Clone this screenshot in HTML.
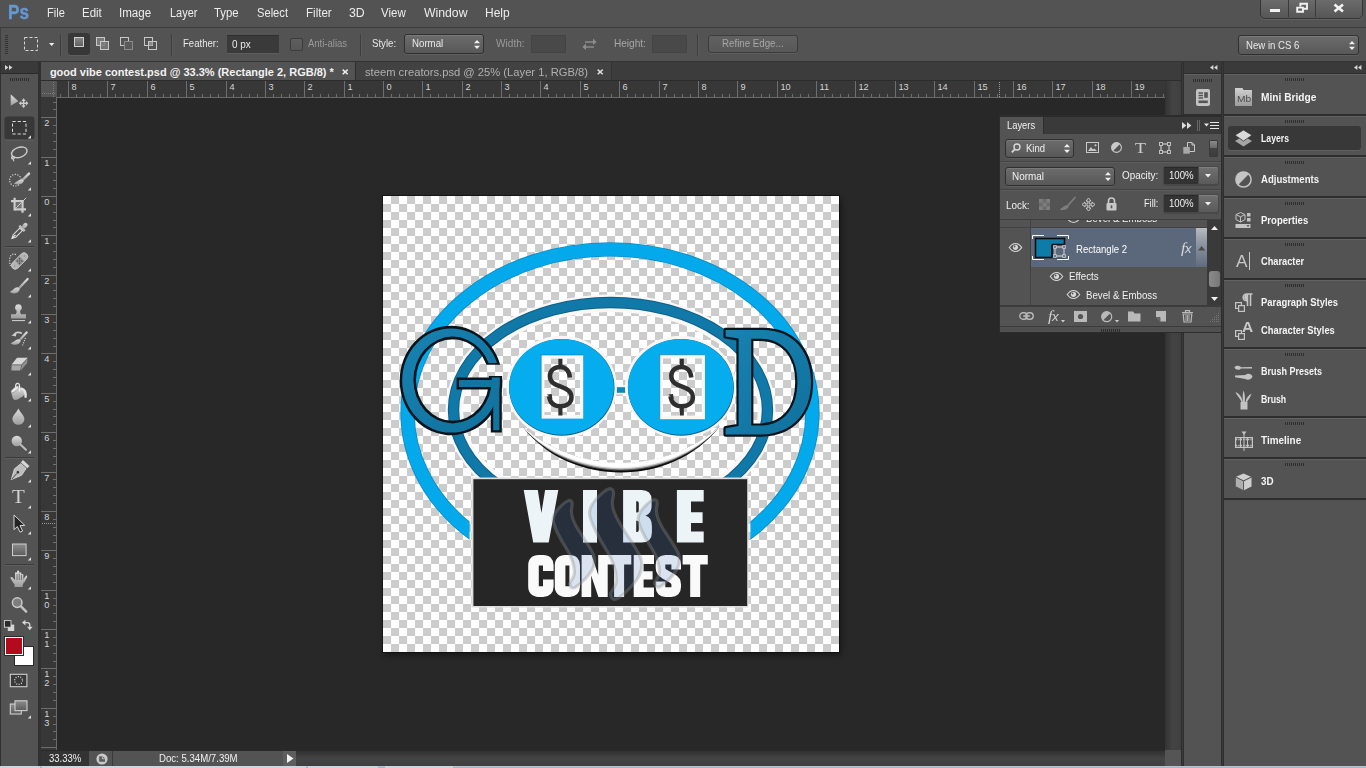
<!DOCTYPE html>
<html><head><meta charset="utf-8"><title>Photoshop</title><style>
html,body{margin:0;padding:0;}
body{width:1366px;height:768px;overflow:hidden;position:relative;background:#535353;font-family:"Liberation Sans",sans-serif;}
div,svg,span.t{position:absolute;}
span.t{white-space:pre;line-height:16px;transform-origin:0 50%;}
svg{overflow:visible}
</style></head><body>
<div style="left:0px;top:0px;width:1366px;height:27px;background:#535353"></div>
<div style="left:0px;top:27px;width:1366px;height:1px;background:#3b3b3b"></div>
<div style="left:0px;top:28px;width:1366px;height:33px;background:#535353"></div>
<div style="left:0px;top:28px;width:1px;height:33px;background:#3f3f3f"></div>
<div style="left:0px;top:61px;width:1366px;height:1px;background:#333"></div>
<div style="left:0px;top:62px;width:41px;height:706px;background:#303030"></div>
<div style="left:1px;top:62px;width:37px;height:11px;background:#3a3a3a"></div>
<div style="left:1px;top:73px;width:37px;height:1px;background:#2b2b2b"></div>
<div style="left:1px;top:74px;width:37px;height:694px;background:#535353"></div>
<div style="left:41px;top:62px;width:1140px;height:19px;background:#3c3c3c"></div>
<div style="left:41px;top:62px;width:314px;height:19px;background:#535353"></div>
<div style="left:355px;top:62px;width:1px;height:19px;background:#2e2e2e"></div>
<div style="left:356px;top:62px;width:255px;height:19px;background:#424242"></div>
<div style="left:611px;top:62px;width:1px;height:19px;background:#333"></div>
<div style="left:41px;top:80px;width:1140px;height:1px;background:#2c2c2c"></div>
<div style="left:41px;top:81px;width:1124px;height:17px;background:#373737"></div>
<div style="left:41px;top:81px;width:16px;height:669px;background:#373737"></div>
<div style="left:41px;top:81px;width:16px;height:16px;background:#555"></div>
<div style="left:57px;top:98px;width:1108px;height:652px;background:#282828"></div>
<div style="left:57px;top:97px;width:1108px;height:1px;background:#6a6a6a"></div>
<div style="left:56px;top:97px;width:1px;height:653px;background:#6a6a6a"></div>
<div style="left:1165px;top:81px;width:16px;height:669px;background:linear-gradient(90deg,#333 0%,#444 50%,#3f3f3f 100%)"></div>
<div style="left:296px;top:750px;width:869px;height:16px;background:linear-gradient(180deg,#2e2e2e 0%,#444 55%,#3f3f3f 100%)"></div>
<div style="left:1165px;top:750px;width:16px;height:16px;background:#555"></div>
<div style="left:41px;top:750px;width:1124px;height:1px;background:#2a2a2a"></div>
<div style="left:1181px;top:62px;width:3px;height:706px;background:#2e2e2e"></div>
<div style="left:1182px;top:62px;width:1px;height:706px;background:#3a3a3a"></div>
<div style="left:1184px;top:62px;width:37px;height:11px;background:#3a3a3a"></div>
<div style="left:1184px;top:73px;width:37px;height:1px;background:#2b2b2b"></div>
<div style="left:1184px;top:74px;width:37px;height:694px;background:#535353"></div>
<div style="left:1221px;top:62px;width:3px;height:706px;background:#2e2e2e"></div>
<div style="left:1222px;top:62px;width:1px;height:706px;background:#3a3a3a"></div>
<div style="left:1224px;top:62px;width:142px;height:11px;background:#3a3a3a"></div>
<div style="left:1224px;top:73px;width:142px;height:1px;background:#2b2b2b"></div>
<div style="left:1224px;top:74px;width:142px;height:694px;background:#535353"></div>
<svg style="left:0;top:0" width="1366" height="768"><rect x="60" y="94" width="1" height="3" fill="#6e6e6e"/><rect x="68" y="81" width="1" height="16" fill="#6e6e6e"/><rect x="76" y="94" width="1" height="3" fill="#6e6e6e"/><rect x="84" y="94" width="1" height="3" fill="#6e6e6e"/><rect x="92" y="94" width="1" height="3" fill="#6e6e6e"/><rect x="100" y="94" width="1" height="3" fill="#6e6e6e"/><rect x="107" y="81" width="1" height="16" fill="#6e6e6e"/><rect x="115" y="94" width="1" height="3" fill="#6e6e6e"/><rect x="123" y="94" width="1" height="3" fill="#6e6e6e"/><rect x="131" y="94" width="1" height="3" fill="#6e6e6e"/><rect x="139" y="94" width="1" height="3" fill="#6e6e6e"/><rect x="147" y="81" width="1" height="16" fill="#6e6e6e"/><rect x="155" y="94" width="1" height="3" fill="#6e6e6e"/><rect x="163" y="94" width="1" height="3" fill="#6e6e6e"/><rect x="170" y="94" width="1" height="3" fill="#6e6e6e"/><rect x="178" y="94" width="1" height="3" fill="#6e6e6e"/><rect x="186" y="81" width="1" height="16" fill="#6e6e6e"/><rect x="194" y="94" width="1" height="3" fill="#6e6e6e"/><rect x="202" y="94" width="1" height="3" fill="#6e6e6e"/><rect x="210" y="94" width="1" height="3" fill="#6e6e6e"/><rect x="218" y="94" width="1" height="3" fill="#6e6e6e"/><rect x="226" y="81" width="1" height="16" fill="#6e6e6e"/><rect x="233" y="94" width="1" height="3" fill="#6e6e6e"/><rect x="241" y="94" width="1" height="3" fill="#6e6e6e"/><rect x="249" y="94" width="1" height="3" fill="#6e6e6e"/><rect x="257" y="94" width="1" height="3" fill="#6e6e6e"/><rect x="265" y="81" width="1" height="16" fill="#6e6e6e"/><rect x="273" y="94" width="1" height="3" fill="#6e6e6e"/><rect x="281" y="94" width="1" height="3" fill="#6e6e6e"/><rect x="289" y="94" width="1" height="3" fill="#6e6e6e"/><rect x="296" y="94" width="1" height="3" fill="#6e6e6e"/><rect x="304" y="81" width="1" height="16" fill="#6e6e6e"/><rect x="312" y="94" width="1" height="3" fill="#6e6e6e"/><rect x="320" y="94" width="1" height="3" fill="#6e6e6e"/><rect x="328" y="94" width="1" height="3" fill="#6e6e6e"/><rect x="336" y="94" width="1" height="3" fill="#6e6e6e"/><rect x="344" y="81" width="1" height="16" fill="#6e6e6e"/><rect x="352" y="94" width="1" height="3" fill="#6e6e6e"/><rect x="359" y="94" width="1" height="3" fill="#6e6e6e"/><rect x="367" y="94" width="1" height="3" fill="#6e6e6e"/><rect x="375" y="94" width="1" height="3" fill="#6e6e6e"/><rect x="383" y="81" width="1" height="16" fill="#6e6e6e"/><rect x="391" y="94" width="1" height="3" fill="#6e6e6e"/><rect x="399" y="94" width="1" height="3" fill="#6e6e6e"/><rect x="407" y="94" width="1" height="3" fill="#6e6e6e"/><rect x="414" y="94" width="1" height="3" fill="#6e6e6e"/><rect x="422" y="81" width="1" height="16" fill="#6e6e6e"/><rect x="430" y="94" width="1" height="3" fill="#6e6e6e"/><rect x="438" y="94" width="1" height="3" fill="#6e6e6e"/><rect x="446" y="94" width="1" height="3" fill="#6e6e6e"/><rect x="454" y="94" width="1" height="3" fill="#6e6e6e"/><rect x="462" y="81" width="1" height="16" fill="#6e6e6e"/><rect x="470" y="94" width="1" height="3" fill="#6e6e6e"/><rect x="477" y="94" width="1" height="3" fill="#6e6e6e"/><rect x="485" y="94" width="1" height="3" fill="#6e6e6e"/><rect x="493" y="94" width="1" height="3" fill="#6e6e6e"/><rect x="501" y="81" width="1" height="16" fill="#6e6e6e"/><rect x="509" y="94" width="1" height="3" fill="#6e6e6e"/><rect x="517" y="94" width="1" height="3" fill="#6e6e6e"/><rect x="525" y="94" width="1" height="3" fill="#6e6e6e"/><rect x="533" y="94" width="1" height="3" fill="#6e6e6e"/><rect x="540" y="81" width="1" height="16" fill="#6e6e6e"/><rect x="548" y="94" width="1" height="3" fill="#6e6e6e"/><rect x="556" y="94" width="1" height="3" fill="#6e6e6e"/><rect x="564" y="94" width="1" height="3" fill="#6e6e6e"/><rect x="572" y="94" width="1" height="3" fill="#6e6e6e"/><rect x="580" y="81" width="1" height="16" fill="#6e6e6e"/><rect x="588" y="94" width="1" height="3" fill="#6e6e6e"/><rect x="596" y="94" width="1" height="3" fill="#6e6e6e"/><rect x="603" y="94" width="1" height="3" fill="#6e6e6e"/><rect x="611" y="94" width="1" height="3" fill="#6e6e6e"/><rect x="619" y="81" width="1" height="16" fill="#6e6e6e"/><rect x="627" y="94" width="1" height="3" fill="#6e6e6e"/><rect x="635" y="94" width="1" height="3" fill="#6e6e6e"/><rect x="643" y="94" width="1" height="3" fill="#6e6e6e"/><rect x="651" y="94" width="1" height="3" fill="#6e6e6e"/><rect x="659" y="81" width="1" height="16" fill="#6e6e6e"/><rect x="666" y="94" width="1" height="3" fill="#6e6e6e"/><rect x="674" y="94" width="1" height="3" fill="#6e6e6e"/><rect x="682" y="94" width="1" height="3" fill="#6e6e6e"/><rect x="690" y="94" width="1" height="3" fill="#6e6e6e"/><rect x="698" y="81" width="1" height="16" fill="#6e6e6e"/><rect x="706" y="94" width="1" height="3" fill="#6e6e6e"/><rect x="714" y="94" width="1" height="3" fill="#6e6e6e"/><rect x="722" y="94" width="1" height="3" fill="#6e6e6e"/><rect x="729" y="94" width="1" height="3" fill="#6e6e6e"/><rect x="737" y="81" width="1" height="16" fill="#6e6e6e"/><rect x="745" y="94" width="1" height="3" fill="#6e6e6e"/><rect x="753" y="94" width="1" height="3" fill="#6e6e6e"/><rect x="761" y="94" width="1" height="3" fill="#6e6e6e"/><rect x="769" y="94" width="1" height="3" fill="#6e6e6e"/><rect x="777" y="81" width="1" height="16" fill="#6e6e6e"/><rect x="785" y="94" width="1" height="3" fill="#6e6e6e"/><rect x="792" y="94" width="1" height="3" fill="#6e6e6e"/><rect x="800" y="94" width="1" height="3" fill="#6e6e6e"/><rect x="808" y="94" width="1" height="3" fill="#6e6e6e"/><rect x="816" y="81" width="1" height="16" fill="#6e6e6e"/><rect x="824" y="94" width="1" height="3" fill="#6e6e6e"/><rect x="832" y="94" width="1" height="3" fill="#6e6e6e"/><rect x="840" y="94" width="1" height="3" fill="#6e6e6e"/><rect x="848" y="94" width="1" height="3" fill="#6e6e6e"/><rect x="855" y="81" width="1" height="16" fill="#6e6e6e"/><rect x="863" y="94" width="1" height="3" fill="#6e6e6e"/><rect x="871" y="94" width="1" height="3" fill="#6e6e6e"/><rect x="879" y="94" width="1" height="3" fill="#6e6e6e"/><rect x="887" y="94" width="1" height="3" fill="#6e6e6e"/><rect x="895" y="81" width="1" height="16" fill="#6e6e6e"/><rect x="903" y="94" width="1" height="3" fill="#6e6e6e"/><rect x="911" y="94" width="1" height="3" fill="#6e6e6e"/><rect x="918" y="94" width="1" height="3" fill="#6e6e6e"/><rect x="926" y="94" width="1" height="3" fill="#6e6e6e"/><rect x="934" y="81" width="1" height="16" fill="#6e6e6e"/><rect x="942" y="94" width="1" height="3" fill="#6e6e6e"/><rect x="950" y="94" width="1" height="3" fill="#6e6e6e"/><rect x="958" y="94" width="1" height="3" fill="#6e6e6e"/><rect x="966" y="94" width="1" height="3" fill="#6e6e6e"/><rect x="974" y="81" width="1" height="16" fill="#6e6e6e"/><rect x="981" y="94" width="1" height="3" fill="#6e6e6e"/><rect x="989" y="94" width="1" height="3" fill="#6e6e6e"/><rect x="997" y="94" width="1" height="3" fill="#6e6e6e"/><rect x="1005" y="94" width="1" height="3" fill="#6e6e6e"/><rect x="1013" y="81" width="1" height="16" fill="#6e6e6e"/><rect x="1021" y="94" width="1" height="3" fill="#6e6e6e"/><rect x="1029" y="94" width="1" height="3" fill="#6e6e6e"/><rect x="1037" y="94" width="1" height="3" fill="#6e6e6e"/><rect x="1044" y="94" width="1" height="3" fill="#6e6e6e"/><rect x="1052" y="81" width="1" height="16" fill="#6e6e6e"/><rect x="1060" y="94" width="1" height="3" fill="#6e6e6e"/><rect x="1068" y="94" width="1" height="3" fill="#6e6e6e"/><rect x="1076" y="94" width="1" height="3" fill="#6e6e6e"/><rect x="1084" y="94" width="1" height="3" fill="#6e6e6e"/><rect x="1092" y="81" width="1" height="16" fill="#6e6e6e"/><rect x="1100" y="94" width="1" height="3" fill="#6e6e6e"/><rect x="1107" y="94" width="1" height="3" fill="#6e6e6e"/><rect x="1115" y="94" width="1" height="3" fill="#6e6e6e"/><rect x="1123" y="94" width="1" height="3" fill="#6e6e6e"/><rect x="1131" y="81" width="1" height="16" fill="#6e6e6e"/><rect x="1139" y="94" width="1" height="3" fill="#6e6e6e"/><rect x="1147" y="94" width="1" height="3" fill="#6e6e6e"/><rect x="1155" y="94" width="1" height="3" fill="#6e6e6e"/><rect x="1163" y="94" width="1" height="3" fill="#6e6e6e"/><rect x="53" y="102" width="3" height="1" fill="#6e6e6e"/><rect x="53" y="109" width="3" height="1" fill="#6e6e6e"/><rect x="41" y="117" width="15" height="1" fill="#6e6e6e"/><rect x="53" y="125" width="3" height="1" fill="#6e6e6e"/><rect x="53" y="133" width="3" height="1" fill="#6e6e6e"/><rect x="53" y="141" width="3" height="1" fill="#6e6e6e"/><rect x="53" y="149" width="3" height="1" fill="#6e6e6e"/><rect x="41" y="157" width="15" height="1" fill="#6e6e6e"/><rect x="53" y="165" width="3" height="1" fill="#6e6e6e"/><rect x="53" y="172" width="3" height="1" fill="#6e6e6e"/><rect x="53" y="180" width="3" height="1" fill="#6e6e6e"/><rect x="53" y="188" width="3" height="1" fill="#6e6e6e"/><rect x="41" y="196" width="15" height="1" fill="#6e6e6e"/><rect x="53" y="204" width="3" height="1" fill="#6e6e6e"/><rect x="53" y="212" width="3" height="1" fill="#6e6e6e"/><rect x="53" y="220" width="3" height="1" fill="#6e6e6e"/><rect x="53" y="227" width="3" height="1" fill="#6e6e6e"/><rect x="41" y="235" width="15" height="1" fill="#6e6e6e"/><rect x="53" y="243" width="3" height="1" fill="#6e6e6e"/><rect x="53" y="251" width="3" height="1" fill="#6e6e6e"/><rect x="53" y="259" width="3" height="1" fill="#6e6e6e"/><rect x="53" y="267" width="3" height="1" fill="#6e6e6e"/><rect x="41" y="275" width="15" height="1" fill="#6e6e6e"/><rect x="53" y="283" width="3" height="1" fill="#6e6e6e"/><rect x="53" y="290" width="3" height="1" fill="#6e6e6e"/><rect x="53" y="298" width="3" height="1" fill="#6e6e6e"/><rect x="53" y="306" width="3" height="1" fill="#6e6e6e"/><rect x="41" y="314" width="15" height="1" fill="#6e6e6e"/><rect x="53" y="322" width="3" height="1" fill="#6e6e6e"/><rect x="53" y="330" width="3" height="1" fill="#6e6e6e"/><rect x="53" y="338" width="3" height="1" fill="#6e6e6e"/><rect x="53" y="346" width="3" height="1" fill="#6e6e6e"/><rect x="41" y="353" width="15" height="1" fill="#6e6e6e"/><rect x="53" y="361" width="3" height="1" fill="#6e6e6e"/><rect x="53" y="369" width="3" height="1" fill="#6e6e6e"/><rect x="53" y="377" width="3" height="1" fill="#6e6e6e"/><rect x="53" y="385" width="3" height="1" fill="#6e6e6e"/><rect x="41" y="393" width="15" height="1" fill="#6e6e6e"/><rect x="53" y="401" width="3" height="1" fill="#6e6e6e"/><rect x="53" y="409" width="3" height="1" fill="#6e6e6e"/><rect x="53" y="416" width="3" height="1" fill="#6e6e6e"/><rect x="53" y="424" width="3" height="1" fill="#6e6e6e"/><rect x="41" y="432" width="15" height="1" fill="#6e6e6e"/><rect x="53" y="440" width="3" height="1" fill="#6e6e6e"/><rect x="53" y="448" width="3" height="1" fill="#6e6e6e"/><rect x="53" y="456" width="3" height="1" fill="#6e6e6e"/><rect x="53" y="464" width="3" height="1" fill="#6e6e6e"/><rect x="41" y="472" width="15" height="1" fill="#6e6e6e"/><rect x="53" y="479" width="3" height="1" fill="#6e6e6e"/><rect x="53" y="487" width="3" height="1" fill="#6e6e6e"/><rect x="53" y="495" width="3" height="1" fill="#6e6e6e"/><rect x="53" y="503" width="3" height="1" fill="#6e6e6e"/><rect x="41" y="511" width="15" height="1" fill="#6e6e6e"/><rect x="53" y="519" width="3" height="1" fill="#6e6e6e"/><rect x="53" y="527" width="3" height="1" fill="#6e6e6e"/><rect x="53" y="535" width="3" height="1" fill="#6e6e6e"/><rect x="53" y="542" width="3" height="1" fill="#6e6e6e"/><rect x="41" y="550" width="15" height="1" fill="#6e6e6e"/><rect x="53" y="558" width="3" height="1" fill="#6e6e6e"/><rect x="53" y="566" width="3" height="1" fill="#6e6e6e"/><rect x="53" y="574" width="3" height="1" fill="#6e6e6e"/><rect x="53" y="582" width="3" height="1" fill="#6e6e6e"/><rect x="41" y="590" width="15" height="1" fill="#6e6e6e"/><rect x="53" y="598" width="3" height="1" fill="#6e6e6e"/><rect x="53" y="605" width="3" height="1" fill="#6e6e6e"/><rect x="53" y="613" width="3" height="1" fill="#6e6e6e"/><rect x="53" y="621" width="3" height="1" fill="#6e6e6e"/><rect x="41" y="629" width="15" height="1" fill="#6e6e6e"/><rect x="53" y="637" width="3" height="1" fill="#6e6e6e"/><rect x="53" y="645" width="3" height="1" fill="#6e6e6e"/><rect x="53" y="653" width="3" height="1" fill="#6e6e6e"/><rect x="53" y="661" width="3" height="1" fill="#6e6e6e"/><rect x="41" y="668" width="15" height="1" fill="#6e6e6e"/><rect x="53" y="676" width="3" height="1" fill="#6e6e6e"/><rect x="53" y="684" width="3" height="1" fill="#6e6e6e"/><rect x="53" y="692" width="3" height="1" fill="#6e6e6e"/><rect x="53" y="700" width="3" height="1" fill="#6e6e6e"/><rect x="41" y="708" width="15" height="1" fill="#6e6e6e"/><rect x="53" y="716" width="3" height="1" fill="#6e6e6e"/><rect x="53" y="724" width="3" height="1" fill="#6e6e6e"/><rect x="53" y="731" width="3" height="1" fill="#6e6e6e"/><rect x="53" y="739" width="3" height="1" fill="#6e6e6e"/><rect x="41" y="747" width="15" height="1" fill="#6e6e6e"/><path d="M42 93.5H56 M53.5 82V97" stroke="#7c7c7c" stroke-width="1" stroke-dasharray="1 1" fill="none"/><path d="M999.5 82V97" stroke="#9a9a9a" stroke-width="1" stroke-dasharray="1 1" fill="none"/><path d="M42 523.5H56" stroke="#9a9a9a" stroke-width="1" stroke-dasharray="1 1" fill="none"/></svg>
<span class="t" style="left:71.50px;top:79.11px;font-size:9.2px;color:#d4d4d4;">8</span>
<span class="t" style="left:110.50px;top:79.11px;font-size:9.2px;color:#d4d4d4;">7</span>
<span class="t" style="left:150.50px;top:79.11px;font-size:9.2px;color:#d4d4d4;">6</span>
<span class="t" style="left:189.50px;top:79.11px;font-size:9.2px;color:#d4d4d4;">5</span>
<span class="t" style="left:229.50px;top:79.11px;font-size:9.2px;color:#d4d4d4;">4</span>
<span class="t" style="left:268.50px;top:79.11px;font-size:9.2px;color:#d4d4d4;">3</span>
<span class="t" style="left:307.50px;top:79.11px;font-size:9.2px;color:#d4d4d4;">2</span>
<span class="t" style="left:347.50px;top:79.11px;font-size:9.2px;color:#d4d4d4;">1</span>
<span class="t" style="left:386.50px;top:79.11px;font-size:9.2px;color:#d4d4d4;">0</span>
<span class="t" style="left:425.50px;top:79.11px;font-size:9.2px;color:#d4d4d4;">1</span>
<span class="t" style="left:465.50px;top:79.11px;font-size:9.2px;color:#d4d4d4;">2</span>
<span class="t" style="left:504.50px;top:79.11px;font-size:9.2px;color:#d4d4d4;">3</span>
<span class="t" style="left:543.50px;top:79.11px;font-size:9.2px;color:#d4d4d4;">4</span>
<span class="t" style="left:583.50px;top:79.11px;font-size:9.2px;color:#d4d4d4;">5</span>
<span class="t" style="left:622.50px;top:79.11px;font-size:9.2px;color:#d4d4d4;">6</span>
<span class="t" style="left:662.50px;top:79.11px;font-size:9.2px;color:#d4d4d4;">7</span>
<span class="t" style="left:701.50px;top:79.11px;font-size:9.2px;color:#d4d4d4;">8</span>
<span class="t" style="left:740.50px;top:79.11px;font-size:9.2px;color:#d4d4d4;">9</span>
<span class="t" style="left:780.50px;top:79.11px;font-size:9.2px;color:#d4d4d4;">10</span>
<span class="t" style="left:819.50px;top:79.11px;font-size:9.2px;color:#d4d4d4;">11</span>
<span class="t" style="left:858.50px;top:79.11px;font-size:9.2px;color:#d4d4d4;">12</span>
<span class="t" style="left:898.50px;top:79.11px;font-size:9.2px;color:#d4d4d4;">13</span>
<span class="t" style="left:937.50px;top:79.11px;font-size:9.2px;color:#d4d4d4;">14</span>
<span class="t" style="left:977.50px;top:79.11px;font-size:9.2px;color:#d4d4d4;">15</span>
<span class="t" style="left:1016.50px;top:79.11px;font-size:9.2px;color:#d4d4d4;">16</span>
<span class="t" style="left:1055.50px;top:79.11px;font-size:9.2px;color:#d4d4d4;">17</span>
<span class="t" style="left:1095.50px;top:79.11px;font-size:9.2px;color:#d4d4d4;">18</span>
<span class="t" style="left:1134.50px;top:79.11px;font-size:9.2px;color:#d4d4d4;">19</span>
<span class="t" style="left:44.20px;top:115.01px;font-size:9.2px;color:#d4d4d4;">2</span>
<span class="t" style="left:44.20px;top:155.01px;font-size:9.2px;color:#d4d4d4;">1</span>
<span class="t" style="left:44.20px;top:194.01px;font-size:9.2px;color:#d4d4d4;">0</span>
<span class="t" style="left:44.20px;top:233.01px;font-size:9.2px;color:#d4d4d4;">1</span>
<span class="t" style="left:44.20px;top:273.01px;font-size:9.2px;color:#d4d4d4;">2</span>
<span class="t" style="left:44.20px;top:312.01px;font-size:9.2px;color:#d4d4d4;">3</span>
<span class="t" style="left:44.20px;top:351.01px;font-size:9.2px;color:#d4d4d4;">4</span>
<span class="t" style="left:44.20px;top:391.01px;font-size:9.2px;color:#d4d4d4;">5</span>
<span class="t" style="left:44.20px;top:430.01px;font-size:9.2px;color:#d4d4d4;">6</span>
<span class="t" style="left:44.20px;top:470.01px;font-size:9.2px;color:#d4d4d4;">7</span>
<span class="t" style="left:44.20px;top:509.01px;font-size:9.2px;color:#d4d4d4;">8</span>
<span class="t" style="left:44.20px;top:548.01px;font-size:9.2px;color:#d4d4d4;">9</span>
<span class="t" style="left:44.20px;top:588.01px;font-size:9.2px;color:#d4d4d4;">1</span>
<span class="t" style="left:44.20px;top:596.81px;font-size:9.2px;color:#d4d4d4;">0</span>
<span class="t" style="left:44.20px;top:627.01px;font-size:9.2px;color:#d4d4d4;">1</span>
<span class="t" style="left:44.20px;top:635.81px;font-size:9.2px;color:#d4d4d4;">1</span>
<span class="t" style="left:44.20px;top:666.01px;font-size:9.2px;color:#d4d4d4;">1</span>
<span class="t" style="left:44.20px;top:674.81px;font-size:9.2px;color:#d4d4d4;">2</span>
<span class="t" style="left:44.20px;top:706.01px;font-size:9.2px;color:#d4d4d4;">1</span>
<span class="t" style="left:44.20px;top:714.81px;font-size:9.2px;color:#d4d4d4;">3</span>
<span class="t" style="left:7.60px;top:3.94px;font-size:19.5px;color:#6698d4;font-weight:700;transform:scaleX(0.8804);-webkit-text-stroke:0.35px #6698d4;">Ps</span>
<span class="t" style="left:47.40px;top:4.87px;font-size:12.5px;color:#ececec;transform:scaleX(0.8837);">File</span>
<span class="t" style="left:82.40px;top:4.87px;font-size:12.5px;color:#ececec;transform:scaleX(0.9192);">Edit</span>
<span class="t" style="left:119.20px;top:4.87px;font-size:12.5px;color:#ececec;transform:scaleX(0.9268);">Image</span>
<span class="t" style="left:169.60px;top:4.87px;font-size:12.5px;color:#ececec;transform:scaleX(0.8763);">Layer</span>
<span class="t" style="left:214.40px;top:4.87px;font-size:12.5px;color:#ececec;transform:scaleX(0.9114);">Type</span>
<span class="t" style="left:256.90px;top:4.87px;font-size:12.5px;color:#ececec;transform:scaleX(0.8923);">Select</span>
<span class="t" style="left:306.30px;top:4.87px;font-size:12.5px;color:#ececec;transform:scaleX(0.9252);">Filter</span>
<span class="t" style="left:348.80px;top:4.87px;font-size:12.5px;color:#ececec;transform:scaleX(0.9888);">3D</span>
<span class="t" style="left:381.40px;top:4.87px;font-size:12.5px;color:#ececec;transform:scaleX(0.9193);">View</span>
<span class="t" style="left:423.90px;top:4.87px;font-size:12.5px;color:#ececec;transform:scaleX(0.9784);">Window</span>
<span class="t" style="left:485.20px;top:4.87px;font-size:12.5px;color:#ececec;transform:scaleX(0.9608);">Help</span>
<div style="left:1260px;top:-1px;width:101px;height:18px;border:1px solid #353535;border-radius:0 0 5px 5px;background:linear-gradient(#6b6b6b,#565656);box-shadow:0 1px 0 #626262;"></div>
<div style="left:1288px;top:0px;width:1px;height:17px;background:#3a3a3a"></div>
<div style="left:1315px;top:0px;width:1px;height:17px;background:#3a3a3a"></div>
<svg style="left:1260px;top:0px;" width="103" height="18" viewBox="0 0 103 18"><rect x="10" y="9" width="10" height="3" fill="#f2f2f2"/><path d="M40.4 3.8h6.6v5h-6.6z" fill="none" stroke="#f2f2f2" stroke-width="1.9"/><rect x="36.4" y="6.6" width="7.4" height="6" fill="#606060"/><path d="M37.2 7.6h5.8v4.2h-5.8z" fill="none" stroke="#f2f2f2" stroke-width="1.9"/><path d="M74.5 4.5L83 11.5M83 4.5L74.5 11.5" stroke="#f2f2f2" stroke-width="2.6"/></svg>
<svg style="left:5px;top:35px;" width="3" height="20" viewBox="0 0 3 20"><rect x="0" y="0" width="3" height="1" fill="#333"/><rect x="0" y="2" width="3" height="1" fill="#333"/><rect x="0" y="4" width="3" height="1" fill="#333"/><rect x="0" y="6" width="3" height="1" fill="#333"/><rect x="0" y="8" width="3" height="1" fill="#333"/><rect x="0" y="10" width="3" height="1" fill="#333"/><rect x="0" y="12" width="3" height="1" fill="#333"/><rect x="0" y="14" width="3" height="1" fill="#333"/><rect x="0" y="16" width="3" height="1" fill="#333"/><rect x="0" y="18" width="3" height="1" fill="#333"/></svg>
<svg style="left:23px;top:36px;" width="16" height="16" viewBox="0 0 16 16"><rect x="1.5" y="1.5" width="13" height="13" fill="none" stroke="#d6d6d6" stroke-width="1" stroke-dasharray="3 2"/></svg>
<svg style="left:49px;top:43px;" width="6" height="4" viewBox="0 0 6 4"><path d="M0 0H5.4L2.7 3Z" fill="#eee"/></svg>
<div style="left:60px;top:34px;width:1px;height:22px;background:#3d3d3d"></div>
<div style="left:61px;top:34px;width:1px;height:22px;background:#5a5a5a"></div>
<div style="left:171px;top:34px;width:1px;height:22px;background:#3d3d3d"></div>
<div style="left:172px;top:34px;width:1px;height:22px;background:#5a5a5a"></div>
<div style="left:360px;top:34px;width:1px;height:22px;background:#3d3d3d"></div>
<div style="left:361px;top:34px;width:1px;height:22px;background:#5a5a5a"></div>
<div style="left:697px;top:34px;width:1px;height:22px;background:#3d3d3d"></div>
<div style="left:698px;top:34px;width:1px;height:22px;background:#5a5a5a"></div>
<div style="left:68px;top:33px;width:22px;height:22px;background:#383838;border-radius:3px;box-shadow:0 1px 0 #5e5e5e;"></div>
<svg style="left:74px;top:37px;" width="10" height="10" viewBox="0 0 10 10"><defs><linearGradient id="gsq" x1="0" y1="0" x2="0" y2="1"><stop offset="0" stop-color="#8a8a8a"/><stop offset="1" stop-color="#5e5e5e"/></linearGradient></defs><rect x="0.5" y="0.5" width="9" height="9" fill="url(#gsq)" stroke="#cfcfcf" stroke-width="1"/></svg>
<svg style="left:96px;top:37px;" width="14" height="14" viewBox="0 0 14 14"><rect x="0.5" y="0.5" width="8" height="8" fill="#7a7a7a" stroke="#c8c8c8"/><rect x="4.5" y="4.5" width="8" height="8" fill="#7a7a7a" fill-opacity="0.85" stroke="#c8c8c8"/></svg>
<svg style="left:120px;top:37px;" width="14" height="14" viewBox="0 0 14 14"><rect x="0.5" y="0.5" width="8" height="8" fill="none" stroke="#c8c8c8"/><rect x="4.5" y="4.5" width="8" height="8" fill="#5a5a5a" stroke="#8a8a8a"/></svg>
<svg style="left:144px;top:37px;" width="14" height="14" viewBox="0 0 14 14"><rect x="0.5" y="0.5" width="8" height="8" fill="none" stroke="#c8c8c8"/><rect x="4.5" y="4.5" width="8" height="8" fill="none" stroke="#c8c8c8"/><rect x="5" y="5" width="3.5" height="3.5" fill="#8a8a8a"/></svg>
<span class="t" style="left:183.40px;top:35.19px;font-size:11px;color:#e9e9e9;transform:scaleX(0.8690);">Feather:</span>
<div style="left:227px;top:35px;width:52px;height:18px;background:#3a3a3a;box-shadow:inset 0 1px 0 #2e2e2e,0 1px 0 #5e5e5e;"></div>
<span class="t" style="left:232.20px;top:36.19px;font-size:11px;color:#e9e9e9;transform:scaleX(0.9042);">0 px</span>
<div style="left:289.5px;top:37.5px;width:11px;height:11px;border:1px solid #3c3c3c;border-radius:2px;background:linear-gradient(#5e5e5e,#575757);"></div>
<span class="t" style="left:308.40px;top:35.19px;font-size:11px;color:#9a9a9a;transform:scaleX(0.8620);">Anti-alias</span>
<span class="t" style="left:372.30px;top:35.19px;font-size:11px;color:#e9e9e9;transform:scaleX(0.8760);">Style:</span>
<div style="left:404px;top:34px;width:78px;height:18px;border:1px solid #303030;border-radius:3px;background:linear-gradient(#6c6c6c,#585858);box-shadow:inset 0 1px 0 #7a7a7a,0 1px 0 #5f5f5f;"></div>
<span class="t" style="left:412.20px;top:35.19px;font-size:11px;color:#e9e9e9;transform:scaleX(0.8801);">Normal</span>
<svg style="left:473.6px;top:39.5px;" width="6" height="9" viewBox="0 0 6 9"><path d="M0 3.2L3 0L6 3.2Z M0 5.8L3 9L6 5.8Z" fill="#f0f0f0"/></svg>
<span class="t" style="left:496.20px;top:35.19px;font-size:11px;color:#9a9a9a;transform:scaleX(0.9174);">Width:</span>
<div style="left:531px;top:35px;width:33px;height:16px;border:1px solid #444;background:#494949;"></div>
<svg style="left:582px;top:38px;" width="15" height="12" viewBox="0 0 15 12"><path d="M3 3.2H11V0.6L14.6 3.9L11 7V4.8H3Z M12 8.2H4V5.6L0.4 8.9L4 12V9.8H12Z" fill="#8c8c8c"/></svg>
<span class="t" style="left:614.40px;top:35.19px;font-size:11px;color:#a8a8a8;transform:scaleX(0.9153);">Height:</span>
<div style="left:652px;top:35px;width:33px;height:16px;border:1px solid #444;background:#494949;"></div>
<div style="left:708px;top:35px;width:88px;height:16px;border:1px solid #3c3c3c;border-radius:3px;background:linear-gradient(#616161,#585858);box-shadow:0 1px 0 #5e5e5e;"></div>
<span class="t" style="left:722.00px;top:34.99px;font-size:11px;color:#a6a6a6;transform:scaleX(0.8836);">Refine Edge...</span>
<div style="left:1238px;top:35px;width:119px;height:18px;border:1px solid #303030;border-radius:3px;background:linear-gradient(#6c6c6c,#585858);box-shadow:inset 0 1px 0 #7a7a7a,0 1px 0 #5f5f5f;"></div>
<span class="t" style="left:1246.20px;top:36.69px;font-size:11px;color:#e9e9e9;transform:scaleX(0.8735);">New in CS 6</span>
<svg style="left:1348.5px;top:40.5px;" width="6" height="9" viewBox="0 0 6 9"><path d="M0 3.2L3 0L6 3.2Z M0 5.8L3 9L6 5.8Z" fill="#f0f0f0"/></svg>
<span class="t" style="left:49.90px;top:64.09px;font-size:11px;color:#f2f2f2;font-weight:700;">good vibe contest.psd @ 33.3% (Rectangle 2, RGB/8) *</span>
<svg style="left:341.5px;top:68.6px;" width="6.4" height="5.8" viewBox="0 0 6.4 5.8"><path d="M0.7 0.6L5.7 5.2M5.7 0.6L0.7 5.2" stroke="#eee" stroke-width="1.5"/></svg>
<span class="t" style="left:365.00px;top:64.19px;font-size:11px;color:#b0b0b0;transform:scaleX(1.0181);">steem creators.psd @ 25% (Layer 1, RGB/8)</span>
<svg style="left:597px;top:68.8px;" width="6.4" height="5.8" viewBox="0 0 6.4 5.8"><path d="M0.7 0.6L5.7 5.2M5.7 0.6L0.7 5.2" stroke="#ddd" stroke-width="1.5"/></svg>
<svg style="left:4.5px;top:65px;" width="8" height="5" viewBox="0 0 8 5"><path d="M0 0L3.4 2.5L0 5Z M4 0L7.4 2.5L4 5Z" fill="#d8d8d8"/></svg>
<svg style="left:1210px;top:65px;" width="8" height="5" viewBox="0 0 8 5"><path d="M3.4 0L0 2.5L3.4 5Z M7.4 0L4 2.5L7.4 5Z" fill="#d8d8d8"/></svg>
<svg style="left:1354px;top:65px;" width="8" height="5" viewBox="0 0 8 5"><path d="M3.4 0L0 2.5L3.4 5Z M7.4 0L4 2.5L7.4 5Z" fill="#d8d8d8"/></svg>
<svg style="left:10px;top:78px;" width="20" height="3" viewBox="0 0 20 3"><rect x="0" y="0" width="1" height="3" fill="#2e2e2e"/><rect x="2" y="0" width="1" height="3" fill="#2e2e2e"/><rect x="4" y="0" width="1" height="3" fill="#2e2e2e"/><rect x="6" y="0" width="1" height="3" fill="#2e2e2e"/><rect x="8" y="0" width="1" height="3" fill="#2e2e2e"/><rect x="10" y="0" width="1" height="3" fill="#2e2e2e"/><rect x="12" y="0" width="1" height="3" fill="#2e2e2e"/><rect x="14" y="0" width="1" height="3" fill="#2e2e2e"/><rect x="16" y="0" width="1" height="3" fill="#2e2e2e"/><rect x="18" y="0" width="1" height="3" fill="#2e2e2e"/></svg>
<svg style="left:0;top:62px" width="40" height="706" viewBox="0 62 40 706"><defs><linearGradient id="tg" x1="0" y1="0" x2="0" y2="1"><stop offset="0" stop-color="#dcdcdc"/><stop offset="1" stop-color="#9e9e9e"/></linearGradient><linearGradient id="tg2" x1="0" y1="0" x2="0" y2="1"><stop offset="0" stop-color="#8c8c8c"/><stop offset="1" stop-color="#5c5c5c"/></linearGradient></defs><rect x="4.5" y="116.5" width="30" height="23" rx="3" fill="#383838"/><path d="M6 140.2H33" stroke="#626262" stroke-width="1"/><path d="M5 246.5H34" stroke="#3c3c3c" stroke-width="1"/><path d="M5 247.5H34" stroke="#5d5d5d" stroke-width="1"/><path d="M5 457.5H34" stroke="#3c3c3c" stroke-width="1"/><path d="M5 458.5H34" stroke="#5d5d5d" stroke-width="1"/><path d="M5 564.5H34" stroke="#3c3c3c" stroke-width="1"/><path d="M5 565.5H34" stroke="#5d5d5d" stroke-width="1"/><path d="M31 135.2V138.4H27.8Z" fill="#e2e2e2"/><path d="M31 161.2V164.4H27.8Z" fill="#e2e2e2"/><path d="M31 187.2V190.4H27.8Z" fill="#e2e2e2"/><path d="M31 213.2V216.4H27.8Z" fill="#e2e2e2"/><path d="M31 239.2V242.4H27.8Z" fill="#e2e2e2"/><path d="M31 268.2V271.4H27.8Z" fill="#e2e2e2"/><path d="M31 294.2V297.4H27.8Z" fill="#e2e2e2"/><path d="M31 320.2V323.4H27.8Z" fill="#e2e2e2"/><path d="M31 346.2V349.4H27.8Z" fill="#e2e2e2"/><path d="M31 372.2V375.4H27.8Z" fill="#e2e2e2"/><path d="M31 398.2V401.4H27.8Z" fill="#e2e2e2"/><path d="M31 424.2V427.4H27.8Z" fill="#e2e2e2"/><path d="M31 450.2V453.4H27.8Z" fill="#e2e2e2"/><path d="M31 479.2V482.4H27.8Z" fill="#e2e2e2"/><path d="M31 505.2V508.4H27.8Z" fill="#e2e2e2"/><path d="M31 531.2V534.4H27.8Z" fill="#e2e2e2"/><path d="M31 557.2V560.4H27.8Z" fill="#e2e2e2"/><path d="M31 586.2V589.4H27.8Z" fill="#e2e2e2"/><path d="M31 715.2V718.4H27.8Z" fill="#e2e2e2"/><path d="M10.7 94.3V105.7L18.4 101.2Z" fill="url(#tg)"/><path d="M23.6 98.3L25.8 100.9H24.3V102.5H26V101L28.4 103.2L26 105.4V103.9H24.3V105.6H25.8L23.6 108.1L21.4 105.6H22.9V103.9H21.2V105.4L18.8 103.2L21.2 101V102.5H22.9V100.9H21.4Z" fill="#cdcdcd"/><rect x="12.5" y="121.5" width="13.5" height="12.5" fill="none" stroke="#dcdcdc" stroke-width="1" stroke-dasharray="3.2 2"/><ellipse cx="19.3" cy="152.3" rx="8" ry="5" transform="rotate(-18 19.3 152.3)" fill="none" stroke="#cdcdcd" stroke-width="1.4"/><path d="M12.2 156.2C10.5 157.6 12 159.8 14 158.6C15.6 157.4 13.6 156 12.8 157.4C12.4 159 14.4 159.4 13.6 161.4" fill="none" stroke="#cdcdcd" stroke-width="1.1"/><circle cx="15.4" cy="180.2" r="5.8" fill="none" stroke="#e0e0e0" stroke-width="1.2" stroke-dasharray="1.1 1.5"/><path d="M29 173.6L22.2 180.4" stroke="url(#tg)" stroke-width="2.4" stroke-linecap="round"/><path d="M22.6 179.6C19.8 178.6 17.6 181.2 14 183.4C17 185.4 22.4 185 23.8 181Z" fill="url(#tg)"/><path d="M11 201.2H23.6M14.6 197.8V210.6" stroke="#cdcdcd" stroke-width="2.2" fill="none"/><path d="M14.6 209.4H26M22.5 201.2V212.8" stroke="#cdcdcd" stroke-width="2.2" fill="none"/><path d="M26.2 197.8L16.6 207.4" stroke="#cdcdcd" stroke-width="1" fill="none"/><rect x="16.2" y="202.8" width="5" height="5" fill="#777"/><path d="M21.2 202.8L16.2 207.8" stroke="#cdcdcd" stroke-width="1"/><g transform="rotate(45 19.4 231)"><rect x="17.4" y="220.4" width="4" height="6" rx="2" fill="url(#tg)"/><rect x="15.6" y="226" width="7.6" height="2.6" fill="#bdbdbd"/><path d="M17.6 228.6H21.2V238L19.4 241.6L17.6 238Z" fill="none" stroke="#d8d8d8" stroke-width="1.1"/><path d="M19.4 236.5V241" stroke="#f0f0f0" stroke-width="1.2"/></g><path d="M15.8 254.6C11.5 252.4 8 256.8 10.4 266" fill="none" stroke="#e0e0e0" stroke-width="1.2" stroke-dasharray="1.1 1.5"/><g transform="rotate(-45 19.6 261)"><rect x="9.6" y="257.2" width="20" height="7.6" rx="3.8" fill="#b4b4b4" stroke="#cfcfcf" stroke-width="0.8"/><rect x="16.4" y="257.6" width="6.4" height="6.8" fill="#8e8e8e"/><circle cx="18" cy="259.4" r="0.6" fill="#444"/><circle cx="21.2" cy="259.4" r="0.6" fill="#444"/><circle cx="18" cy="262.6" r="0.6" fill="#444"/><circle cx="21.2" cy="262.6" r="0.6" fill="#444"/><circle cx="19.6" cy="261" r="0.6" fill="#444"/><circle cx="12.6" cy="261" r="0.7" fill="#8e8e8e"/><circle cx="26.6" cy="261" r="0.7" fill="#8e8e8e"/></g><path d="M27.6 279L18.8 288.4" stroke="url(#tg)" stroke-width="2.2" stroke-linecap="round"/><path d="M18.2 287.4C15.2 286.4 13.4 290.2 9.8 291.8C12.8 294.6 18.2 294.2 19.8 289.2Z" fill="url(#tg)"/><path d="M18.4 304.2A3.3 3.3 0 0 1 20.4 310.2C19.8 312 20.4 313.4 21.2 314.2H26V318.6H11V314.2H15.6C16.4 313.4 17 312 16.4 310.2A3.3 3.3 0 0 1 18.4 304.2Z" fill="url(#tg)"/><path d="M12 320.6H25" stroke="#d4d4d4" stroke-width="1"/><path d="M26.6 332.4L19.8 340" stroke="url(#tg)" stroke-width="2.2" stroke-linecap="round"/><path d="M19.4 339.4C16.6 338.4 14.6 341.4 10.8 343.2C13.8 345.8 19 345.4 20.8 341Z" fill="url(#tg)"/><path d="M22 333.4C19 332 16 332.4 14.4 334" fill="none" stroke="#cdcdcd" stroke-width="1.6"/><path d="M11.4 335.6L16.4 332.2L16 336.4Z" fill="#cdcdcd"/><path d="M25.4 338L22.6 345.4" stroke="#e0e0e0" stroke-width="1.1" stroke-dasharray="1 1.3"/><path d="M17 357.8H27.8L21.4 364.6H11.6Z" fill="#d6d6d6"/><path d="M11.6 365.2H21.2L20.2 370.4H11.4Z" fill="#a8a8a8"/><path d="M21.8 364.8L27.8 358.4L27 363.2L20.8 370.4Z" fill="#8e8e8e"/><path d="M11.2 392.4L18.6 386.4L24.6 392.6C25 394 24 395.4 22.6 396.4L17.6 399.6C15.6 400.6 13.6 399.8 12.8 398.2Z" fill="url(#tg)"/><ellipse cx="14.9" cy="389.4" rx="4.8" ry="1.7" transform="rotate(-39 14.9 389.4)" fill="#e8e8e8" stroke="#8e8e8e" stroke-width="0.6"/><path d="M16 388.6C14.4 382.4 19.6 381.4 19.6 386.6V391.8" fill="none" stroke="#ececec" stroke-width="1.2"/><path d="M20.2 387.4C23.6 387.2 26.6 389.8 26.8 394V396.8A1.2 1.3 0 0 1 24.4 396.8C24.4 393 23.6 391 20.6 389.8Z" fill="#e4e4e4"/><path d="M18.4 408.6C20.4 412.8 24.4 415.8 24.4 419.2A6 5.6 0 0 1 12.4 419.2C12.4 415.8 16.4 412.8 18.4 408.6Z" fill="url(#tg)"/><circle cx="16.8" cy="441" r="5.2" fill="url(#tg)"/><path d="M20.4 444.6L26 449.8" stroke="#bdbdbd" stroke-width="2" stroke-linecap="round"/><g transform="rotate(42 19 471)"><rect x="14.6" y="460.2" width="8.8" height="3.2" fill="#d6d6d6"/><path d="M15.4 464.4H22.6L23.8 472.4L19 482.6L14.2 472.4Z" fill="#bdbdbd" stroke="#e6e6e6" stroke-width="0.7"/><path d="M19 482V474" stroke="#444" stroke-width="0.9"/><circle cx="19" cy="472.6" r="1.3" fill="#333"/></g><path d="M14 515V529.6L17.4 526.6L20 532.2L22.6 531L20 525.6L24.8 525.4Z" fill="#222" stroke="#d8d8d8" stroke-width="1"/><rect x="12.5" y="544" width="13.6" height="11.6" fill="url(#tg2)" stroke="#cfcfcf" stroke-width="1"/><path d="M14.6 587V584.6C12.6 581.6 11.4 579.6 10.6 578.4C10.2 577.2 11.6 576.6 12.6 577.6L15 580V573.4C15 572 17 572 17 573.4V571.8C17 570.2 19.2 570.2 19.2 571.8V573.2C19.2 571.8 21.4 571.8 21.4 573.2V575C21.4 573.8 23.4 573.8 23.4 575V581.6C23.4 583.6 22.6 584.6 22.6 587Z" fill="url(#tg)"/><path d="M23 580C24.6 577.6 25.6 576 26.4 575.6C27.4 575.4 27.4 576.6 27 577.6L23.4 584Z" fill="url(#tg)"/><path d="M17.05 574V580M19.25 573.6V580M21.45 575V580" stroke="#535353" stroke-width="0.7"/><circle cx="17.2" cy="602.6" r="4.8" fill="#7e7e7e" stroke="#c9c9c9" stroke-width="1.5"/><path d="M21 606.4L26.2 611.6" stroke="#c4c4c4" stroke-width="2.4" stroke-linecap="round"/><rect x="7.8" y="624.6" width="6.4" height="6.4" fill="#d6d6d6"/><rect x="4.4" y="620.6" width="6.6" height="6.6" fill="#2a2a2a" stroke="#d6d6d6" stroke-width="0.9"/><path d="M24.6 622.6H27.4A2.4 2.4 0 0 1 29.8 625V627.2" fill="none" stroke="#d6d6d6" stroke-width="1.3"/><path d="M22 622.6L25.4 619.8V625.4Z M29.8 630.2L27 626.8H32.6Z" fill="#d6d6d6"/><rect x="14.5" y="646.5" width="19" height="19" fill="#ffffff" stroke="#2a2a2a" stroke-width="1"/><rect x="4.5" y="636.5" width="19" height="19" fill="#ffffff" stroke="#2a2a2a" stroke-width="1"/><rect x="6" y="638" width="16" height="16" fill="#b30b1b"/><rect x="10.3" y="674.3" width="16.6" height="12.4" fill="#3a3a3a" stroke="#cfcfcf" stroke-width="1.1"/><circle cx="18.6" cy="680.5" r="3.9" fill="none" stroke="#e6e6e6" stroke-width="1.2" stroke-dasharray="1 1.45"/><rect x="10.3" y="704" width="11" height="10" fill="url(#tg2)" stroke="#cfcfcf" stroke-width="1.1"/><rect x="15" y="700.8" width="12" height="9.8" fill="url(#tg2)" stroke="#cfcfcf" stroke-width="1.1"/></svg>
<span class="t" style="left:12.40px;top:489.42px;font-size:19.5px;color:#d0d0d0;font-family:'Liberation Serif',serif;transform:scaleX(1.0746);">T</span>
<div style="left:383px;top:196px;width:456px;height:456px;background:#fff;box-shadow:0 0 0 1px rgba(10,10,10,.55),2px 3px 6px rgba(0,0,0,.45);"></div>
<svg style="left:0;top:0" width="1366" height="768" viewBox="0 0 1366 768"><defs>
<pattern id="chk" x="383" y="196" width="16" height="16" patternUnits="userSpaceOnUse"><rect width="16" height="16" fill="#fff"/><rect x="8" width="8" height="8" fill="#ccc"/><rect y="8" width="8" height="8" fill="#ccc"/></pattern>
<clipPath id="cv"><rect x="383" y="196" width="456" height="456"/></clipPath>
<linearGradient id="smile" x1="0" y1="0" x2="0" y2="1"><stop offset="0" stop-color="#ffffff"/><stop offset="0.55" stop-color="#f2f2f2"/><stop offset="0.8" stop-color="#6a6a6a"/><stop offset="1" stop-color="#050505"/></linearGradient>
<linearGradient id="letg" x1="0" y1="0" x2="1" y2="1"><stop offset="0" stop-color="#1882b1"/><stop offset="1" stop-color="#10719d"/></linearGradient>
<filter id="blur1" x="-5%" y="-30%" width="110%" height="160%"><feGaussianBlur stdDeviation="0.45"/></filter>
<clipPath id="gcl"><path clip-rule="evenodd" d="M380 300H520V460H380Z M470 363H520V377.6H470Z"/></clipPath>
<clipPath id="gcd"><path clip-rule="evenodd" d="M380 300H520V460H380Z M471.8 364.8H520V376H471.8Z"/></clipPath>
</defs><g clip-path="url(#cv)"><rect x="383" y="196" width="456" height="456" fill="url(#chk)"/><ellipse cx="610" cy="413" rx="202.4" ry="163.6" fill="none" stroke="#0a8fc7" stroke-width="14.4"/><ellipse cx="610" cy="413" rx="202.4" ry="163.6" fill="none" stroke="#04a9ec" stroke-width="12.6"/><ellipse cx="610.5" cy="410" rx="156.2" ry="106.7" fill="none" stroke="#fbf7f7" stroke-width="17.6"/><ellipse cx="610.5" cy="410" rx="157" ry="107.5" fill="none" stroke="#0b6089" stroke-width="11.4"/><ellipse cx="610.5" cy="410" rx="157" ry="107.5" fill="none" stroke="#1179a8" stroke-width="9.4"/><g filter="url(#blur1)"><path d="M523 427C547 458.4 585 472.4 621 472.4C657 472.4 695 458.4 720 426C695 449.4 657 463.4 621 463.4C585 463.4 547 449.4 523 427Z" fill="#0a0a0a" fill-opacity="1"/><path d="M523 427C547 456.6 585 470.6 621 470.6C657 470.6 695 456.6 720 426C695 449.4 657 463.4 621 463.4C585 463.4 547 449.4 523 427Z" fill="#5a5a5a" fill-opacity="1"/><path d="M523 427C547 455.4 585 469.4 621 469.4C657 469.4 695 455.4 720 426C695 449.4 657 463.4 621 463.4C585 463.4 547 449.4 523 427Z" fill="#b8b8b8" fill-opacity="1"/><path d="M523 427C547 454.2 585 468.2 621 468.2C657 468.2 695 454.2 720 426C695 449.4 657 463.4 621 463.4C585 463.4 547 449.4 523 427Z" fill="#f4f4f4" fill-opacity="1"/><path d="M523 427C547 452.8 585 466.8 621 466.8C657 466.8 695 452.8 720 426C695 449.0 657 463.0 621 463.0C585 463.0 547 449.0 523 427Z" fill="#ffffff" fill-opacity="1"/></g><rect x="613" y="385.4" width="16" height="9" fill="#fbf7f7"/><rect x="616.6" y="387.2" width="9" height="5.6" fill="#0e86b8"/><ellipse cx="561.5" cy="387" rx="55.3" ry="51.2" fill="#fbf6f6"/><ellipse cx="561.8" cy="387.4" rx="52.699999999999996" ry="48.4" fill="#0a5f88"/><ellipse cx="561.5" cy="386.9" rx="52.4" ry="47.8" fill="#05adef"/><ellipse cx="680.6" cy="387" rx="55.6" ry="51.2" fill="#fbf6f6"/><ellipse cx="680.9" cy="387.4" rx="53.0" ry="48.4" fill="#0a5f88"/><ellipse cx="680.6" cy="386.9" rx="52.7" ry="47.8" fill="#05adef"/><rect x="541.2" y="355" width="42.0" height="63.6" fill="#fbf6f6"/><path d="M541.2 418.6V355H583.2" fill="none" stroke="#0a6e9c" stroke-opacity="0.55" stroke-width="1"/><rect x="544.4000000000001" y="358.6" width="35.6" height="56.4" fill="url(#chk)"/><path d="M569.9 377.4C569.2 370.6 565.4 366.9 560.2 366.9C554.2 366.9 549.9 370.6 549.9 376C549.9 382.4 554.6 384.6 560.8 386.6C567.6 388.8 571.5 391.4 571.5 397C571.5 402.8 566.8 406.3 560.6 406.3C554.4 406.3 550.0 403 549.1 396.2" fill="none" stroke="#2f2f2f" stroke-width="4.5"/><path d="M546.9 394.6L551.6 394L552.4 399Z" fill="#2f2f2f"/><path d="M560.4 358.8V367.4M560.4 405.8V415.6" stroke="#2f2f2f" stroke-width="4.1"/><rect x="659.8" y="354.8" width="45.2" height="64.4" fill="#fbf6f6"/><path d="M659.8 419.2V354.8H705" fill="none" stroke="#0a6e9c" stroke-opacity="0.55" stroke-width="1"/><rect x="663.0" y="358.40000000000003" width="38.8" height="57.2" fill="url(#chk)"/><path d="M691.3 377.4C690.6 370.6 686.8 366.9 681.6 366.9C675.6 366.9 671.3 370.6 671.3 376C671.3 382.4 676.0 384.6 682.2 386.6C689.0 388.8 692.9 391.4 692.9 397C692.9 402.8 688.2 406.3 682.0 406.3C675.8 406.3 671.4 403 670.5 396.2" fill="none" stroke="#2f2f2f" stroke-width="4.5"/><path d="M668.3 394.6L673.0 394L673.8 399Z" fill="#2f2f2f"/><path d="M681.8 358.8V367.4M681.8 405.8V415.6" stroke="#2f2f2f" stroke-width="4.1"/><path d="M399.7 380.5A51.3 54.6 0 1 0 502.3 380.5A51.3 54.6 0 1 0 399.7 380.5ZM416.0 380A36.6 40.8 0 1 0 489.20000000000005 380A36.6 40.8 0 1 0 416.0 380Z" fill="#07141c" fill-rule="evenodd" clip-path="url(#gcd)"/><path d="M456.6 377.6H501.8V432.6H490.8V389.4H456.6Z" fill="#07141c"/><path d="M402.2 380.5A48.8 52.1 0 1 0 499.8 380.5A48.8 52.1 0 1 0 402.2 380.5ZM413.40000000000003 380A39.2 43.4 0 1 0 491.8 380A39.2 43.4 0 1 0 413.40000000000003 380Z" fill="url(#letg)" fill-rule="evenodd" clip-path="url(#gcl)"/><path d="M459 380H499.4V430.2H493.2V387H459Z" fill="#13749f"/><path d="M725.6 330H760.4C792 328.6 811 350.4 811 382C811 413.8 791.6 434.6 759.6 434.6H725.6V428.2L738.6 426V338.6L725.6 336.4Z M751.2 338.8V425.6H759.6C782.6 425.6 797.4 409.4 797.4 382C797.4 354.6 782.6 338.8 759.6 338.8Z" fill="#07141c" fill-rule="evenodd" stroke="#07141c" stroke-width="4.4" stroke-linejoin="round"/><path d="M725.6 330H760.4C792 328.6 811 350.4 811 382C811 413.8 791.6 434.6 759.6 434.6H725.6V428.2L738.6 426V338.6L725.6 336.4Z M751.2 338.8V425.6H759.6C782.6 425.6 797.4 409.4 797.4 382C797.4 354.6 782.6 338.8 759.6 338.8Z" fill="url(#letg)" fill-rule="evenodd"/><rect x="469.6" y="500" width="2.4" height="107" fill="url(#chk)"/><rect x="748" y="500" width="2.4" height="107" fill="url(#chk)"/><rect x="471.5" y="477.5" width="277" height="130" fill="#dedede"/><rect x="473.4" y="479.2" width="273.8" height="126.8" fill="#262626"/><path d="M523.7 490.0H537.8L541.4 513L545.1 490.0H558.3L548.7 542.6H533.2Z" fill="#edf4f8"/><rect x="583" y="490.0" width="14" height="52.60000000000002" fill="#edf4f8"/><path fill-rule="evenodd" fill="#edf4f8" d="M623.1 490.0H641.5Q651.6 490.0 651.6 500V505.5Q651.6 513.5 645.5 515.6Q651.9 517.6 651.9 526V532.6Q651.9 542.6 641.5 542.6H623.1Z M636.2 501.2V512.6H637.2Q638.8 512.6 638.8 510.6V503.2Q638.8 501.2 637.2 501.2Z M636.2 520.8V532H637.2Q638.8 532 638.8 530V522.8Q638.8 520.8 637.2 520.8Z"/><path d="M676.9 490.0H703.7V501.6H691V512.2H702.6V523H691V531.6H703.7V542.6H676.9Z" fill="#edf4f8"/><path d="M548.3000000000001 571V565.1999999999999Q548.3000000000001 560.1999999999999 543.3000000000001 560.1999999999999H538.5Q533.5 560.1999999999999 533.5 565.1999999999999V586.6Q533.5 591.6 538.5 591.6H543.3000000000001Q548.3000000000001 591.6 548.3000000000001 586.6V579.4" fill="none" stroke="#f9faf9" stroke-width="10.6"/><path d="M560.0999999999999 565.1999999999999Q560.0999999999999 560.1999999999999 565.0999999999999 560.1999999999999H569.7Q574.7 560.1999999999999 574.7 565.1999999999999V586.6Q574.7 591.6 569.7 591.6H565.0999999999999Q560.0999999999999 591.6 560.0999999999999 586.6Z" fill="none" stroke="#f9faf9" stroke-width="10.6"/><path d="M581.6 554.9H591.6L598.2 575V554.9H607.7V596.9H598.4L591.2 575.6V596.9H581.6Z" fill="#f9faf9"/><path d="M606.9 554.9H631.3V564.4H624.0999999999999V596.9H614.0999999999999V564.4H606.9Z" fill="#f9faf9"/><path d="M633.7 554.9H654V564H643.6V571.2H652.6V579.6H643.6V587.6H654V596.9H633.7Z" fill="#f9faf9"/><path d="M676.2 569.4V564.6999999999999Q676.2 559.6999999999999 671.2 559.6999999999999H665.5Q660.5 559.6999999999999 660.5 564.6999999999999V568Q660.5 571.6 664.4 574L672 578.2Q676.2 580.6 676.2 584.4V587.1Q676.2 592.1 671.2 592.1H665.5Q660.5 592.1 660.5 587.1V581.6" fill="none" stroke="#f9faf9" stroke-width="9.6"/><path d="M682.6 554.9H707.8V564.4H700.2V596.9H690.2V564.4H682.6Z" fill="#f9faf9"/><path d="M610 488.5C604 490 590 503 589.5 512.5C589 520 600 540 607 551C613 561 617 572 616.3 581C616 587 611 591 610.5 594C610.5 598 613 599.5 615 599.5C620 599 634 585 639 576C643 568 642 561 640 556C634 544 622 528 619 522C614 513 611 506 613 498C614 493 614 489 610 488.5Z" transform="translate(569.4 500.3) scale(0.79) translate(-610 -488.5)" fill="#2a62b8" fill-opacity="0.15" stroke="#8a8a8a" stroke-opacity="0.34" stroke-width="4.05"/><path d="M610 488.5C604 490 590 503 589.5 512.5C589 520 600 540 607 551C613 561 617 572 616.3 581C616 587 611 591 610.5 594C610.5 598 613 599.5 615 599.5C620 599 634 585 639 576C643 568 642 561 640 556C634 544 622 528 619 522C614 513 611 506 613 498C614 493 614 489 610 488.5Z" transform="translate(610 488.5) scale(1.0) translate(-610 -488.5)" fill="#2a62b8" fill-opacity="0.15" stroke="#8a8a8a" stroke-opacity="0.34" stroke-width="3.20"/><path d="M610 488.5C604 490 590 503 589.5 512.5C589 520 600 540 607 551C613 561 617 572 616.3 581C616 587 611 591 610.5 594C610.5 598 613 599.5 615 599.5C620 599 634 585 639 576C643 568 642 561 640 556C634 544 622 528 619 522C614 513 611 506 613 498C614 493 614 489 610 488.5Z" transform="translate(654.4 499.5) scale(0.79) translate(-610 -488.5)" fill="#2a62b8" fill-opacity="0.15" stroke="#8a8a8a" stroke-opacity="0.34" stroke-width="4.05"/></g></svg>
<div style="left:999px;top:115px;width:223px;height:218px;background:#2c2c2c"></div>
<div style="left:1000px;top:117px;width:221px;height:17px;background:#3a3a3a"></div>
<div style="left:1000px;top:117px;width:43px;height:17px;background:#535353"></div>
<div style="left:1043px;top:117px;width:1px;height:17px;background:#2e2e2e"></div>
<span class="t" style="left:1007.30px;top:117.39px;font-size:11px;color:#f0f0f0;transform:scaleX(0.8511);">Layers</span>
<svg style="left:1182px;top:122px;" width="10" height="7" viewBox="0 0 10 7"><path d="M0 0L4.4 3.5L0 7Z M5 0L9.4 3.5L5 7Z" fill="#dcdcdc"/></svg>
<div style="left:1197px;top:120px;width:1px;height:11px;background:#666"></div>
<div style="left:1199px;top:120px;width:1px;height:11px;background:#666"></div>
<svg style="left:1204px;top:122px;" width="15" height="7" viewBox="0 0 15 7"><path d="M0 1.5H5L2.5 4.5Z" fill="#e6e6e6"/><path d="M6 0.5H15M6 3.5H15M6 6.5H15" stroke="#e6e6e6" stroke-width="1"/></svg>
<div style="left:1000px;top:134px;width:221px;height:85px;background:#535353"></div>
<div style="left:1000px;top:161px;width:221px;height:1px;background:#444"></div>
<div style="left:1000px;top:162px;width:221px;height:1px;background:#5c5c5c"></div>
<div style="left:1000px;top:189px;width:221px;height:1px;background:#444"></div>
<div style="left:1000px;top:190px;width:221px;height:1px;background:#5c5c5c"></div>
<div style="left:1005px;top:139px;width:67px;height:17px;border:1px solid #303030;border-radius:3px;background:linear-gradient(#6c6c6c,#585858);box-shadow:inset 0 1px 0 #7a7a7a,0 1px 0 #5f5f5f;"></div>
<svg style="left:1011px;top:143px;" width="10" height="10" viewBox="0 0 10 10"><circle cx="6" cy="4" r="3" fill="none" stroke="#d8d8d8" stroke-width="1.4"/><path d="M4 6.2L0.8 9.4" stroke="#d8d8d8" stroke-width="1.8"/></svg>
<span class="t" style="left:1026.20px;top:139.79px;font-size:11px;color:#f0f0f0;transform:scaleX(0.8630);">Kind</span>
<svg style="left:1063.7px;top:144px;" width="6" height="9" viewBox="0 0 6 9"><path d="M0 3.2L3 0L6 3.2Z M0 5.8L3 9L6 5.8Z" fill="#f0f0f0"/></svg>
<svg style="left:1086px;top:142px;" width="13" height="11" viewBox="0 0 13 11"><rect x="0.5" y="0.5" width="12" height="10" fill="none" stroke="#c9c9c9"/><path d="M2 9L5 5L7 7.5L8.5 6.5L11 9Z" fill="#c9c9c9"/><circle cx="9.5" cy="3.3" r="1.1" fill="#c9c9c9"/></svg>
<svg style="left:1110.5px;top:142px;" width="11" height="11" viewBox="0 0 11 11"><circle cx="5.5" cy="5.5" r="4.9" fill="none" stroke="#c9c9c9" stroke-width="1.1"/><path d="M2 9A4.9 4.9 0 0 1 9 2Z" fill="#c9c9c9"/></svg>
<span class="t" style="left:1134.60px;top:139.94px;font-size:15px;color:#d0d0d0;font-family:'Liberation Serif',serif;transform:scaleX(1.2005);">T</span>
<svg style="left:1158.5px;top:142px;" width="12" height="12" viewBox="0 0 12 12"><rect x="2" y="2" width="8" height="8" fill="none" stroke="#c9c9c9" stroke-width="1.2"/><rect x="0.5" y="0.5" width="3" height="3" fill="#535353" stroke="#c9c9c9" stroke-width="0.9"/><rect x="0.5" y="8.5" width="3" height="3" fill="#535353" stroke="#c9c9c9" stroke-width="0.9"/><rect x="8.5" y="0.5" width="3" height="3" fill="#535353" stroke="#c9c9c9" stroke-width="0.9"/><rect x="8.5" y="8.5" width="3" height="3" fill="#535353" stroke="#c9c9c9" stroke-width="0.9"/></svg>
<svg style="left:1182.5px;top:141.5px;" width="12" height="12" viewBox="0 0 12 12"><path d="M4.5 0.5H9L11.5 3V9.5H4.5Z" fill="none" stroke="#c9c9c9" stroke-width="1"/><path d="M9 0.5V3H11.5" fill="none" stroke="#c9c9c9" stroke-width="1"/><rect x="0.3" y="5" width="6.5" height="6.7" fill="#a8a8a8"/></svg>
<div style="left:1208.5px;top:139.5px;width:7px;height:15px;border:1px solid #3a3a3a;border-radius:1px;background:linear-gradient(#8a8a8a 0,#6a6a6a 45%,#424242 50%,#3c3c3c 100%);"></div>
<div style="left:1005px;top:167px;width:108px;height:17px;border:1px solid #303030;border-radius:3px;background:linear-gradient(#6c6c6c,#585858);box-shadow:inset 0 1px 0 #7a7a7a,0 1px 0 #5f5f5f;"></div>
<span class="t" style="left:1011.80px;top:168.19px;font-size:11px;color:#f0f0f0;transform:scaleX(0.9027);">Normal</span>
<svg style="left:1104.6px;top:172px;" width="6" height="9" viewBox="0 0 6 9"><path d="M0 3.2L3 0L6 3.2Z M0 5.8L3 9L6 5.8Z" fill="#f0f0f0"/></svg>
<span class="t" style="left:1122.10px;top:166.79px;font-size:11px;color:#f0f0f0;transform:scaleX(0.8972);">Opacity:</span>
<div style="left:1163px;top:166px;width:56px;height:20px;background:#484848;border-radius:3px;"></div>
<div style="left:1164px;top:167px;width:34px;height:17px;background:#333;box-shadow:inset 0 1px 0 #2a2a2a;"></div>
<div style="left:1198.5px;top:167px;width:19px;height:17px;background:linear-gradient(#707070,#5a5a5a);border-radius:0 2px 2px 0;box-shadow:inset 0 1px 0 #808080;"></div>
<span class="t" style="left:1169.30px;top:167.19px;font-size:11px;color:#f0f0f0;transform:scaleX(0.8779);">100%</span>
<svg style="left:1205px;top:174px;" width="6" height="4" viewBox="0 0 6 4"><path d="M0 0H6L3 3.4Z" fill="#f0f0f0"/></svg>
<div style="left:1163px;top:194px;width:56px;height:20px;background:#484848;border-radius:3px;"></div>
<div style="left:1164px;top:195px;width:34px;height:17px;background:#333;box-shadow:inset 0 1px 0 #2a2a2a;"></div>
<div style="left:1198.5px;top:195px;width:19px;height:17px;background:linear-gradient(#707070,#5a5a5a);border-radius:0 2px 2px 0;box-shadow:inset 0 1px 0 #808080;"></div>
<span class="t" style="left:1169.30px;top:195.19px;font-size:11px;color:#f0f0f0;transform:scaleX(0.8779);">100%</span>
<svg style="left:1205px;top:202px;" width="6" height="4" viewBox="0 0 6 4"><path d="M0 0H6L3 3.4Z" fill="#f0f0f0"/></svg>
<span class="t" style="left:1005.90px;top:196.79px;font-size:11px;color:#f0f0f0;transform:scaleX(0.8976);">Lock:</span>
<svg style="left:1039px;top:199px;" width="11" height="11" viewBox="0 0 11 11"><rect x="0" y="0" width="11" height="11" fill="#6b6b6b"/><rect x="0.00" y="0.00" width="3.67" height="3.67" fill="#7e7e7e"/><rect x="7.34" y="0.00" width="3.67" height="3.67" fill="#7e7e7e"/><rect x="3.67" y="3.67" width="3.67" height="3.67" fill="#7e7e7e"/><rect x="0.00" y="7.34" width="3.67" height="3.67" fill="#7e7e7e"/><rect x="7.34" y="7.34" width="3.67" height="3.67" fill="#7e7e7e"/></svg>
<svg style="left:1059px;top:197px;" width="17" height="14" viewBox="0 0 17 14"><path d="M16 0.5L8 9.5" stroke="#7d7d7d" stroke-width="1.8" stroke-linecap="round"/><path d="M8.5 8.2C6 8 4 10 0.5 12.5C4 13.8 8.5 13 9.8 9.6Z" fill="#7d7d7d"/></svg>
<svg style="left:1082px;top:198px;" width="13" height="13" viewBox="0 0 13 13"><path d="M6.5 0L9 3H7.2V5.8H10V4L13 6.5L10 9V7.2H7.2V10H9L6.5 13L4 10H5.8V7.2H3V9L0 6.5L3 4V5.8H5.8V3H4Z" fill="none" stroke="#d0d0d0" stroke-width="0.9"/></svg>
<svg style="left:1105.5px;top:197px;" width="11" height="14" viewBox="0 0 11 14"><path d="M2.5 6.5V4A3 3 0 0 1 8.5 4V6.5" fill="none" stroke="#c8c8c8" stroke-width="1.6"/><rect x="0.5" y="6" width="10" height="7.5" rx="1" fill="#c8c8c8"/><rect x="4.7" y="8.3" width="1.6" height="3" fill="#555"/></svg>
<span class="t" style="left:1144.00px;top:194.99px;font-size:11px;color:#f0f0f0;transform:scaleX(0.8359);">Fill:</span>
<div style="left:1000px;top:219px;width:221px;height:1px;background:#3e3e3e"></div>
<div style="left:1000px;top:220px;width:207px;height:85px;background:#535353"></div>
<div style="left:1030px;top:220px;width:1px;height:85px;background:#424242"></div>
<div style="left:1000px;top:227px;width:207px;height:1px;background:#424242"></div>
<div style="left:1031px;top:220px;width:176px;height:7px;overflow:hidden"><svg style="left:36px;top:-6.2px;" width="13" height="9" viewBox="0 0 13 9"><path d="M0.3 4.5C2.5 7.8 4.5 8.5 6.5 8.5S10.5 7.8 12.7 4.5" fill="none" stroke="#d6d6d6" stroke-width="1.2"/></svg><span class="t" style="left:55.00px;top:-10.21px;font-size:11px;color:#f0f0f0;transform:scaleX(0.8798);">Bevel &amp; Emboss</span></div>
<div style="left:1031px;top:228px;width:176px;height:39px;background:#5b677a"></div>
<div style="left:1196px;top:228px;width:11px;height:39px;background:linear-gradient(#b8bcc2 0,#8d95a1 40%,#5f6b7d 100%)"></div>
<svg style="left:1198px;top:245.5px;" width="8" height="5" viewBox="0 0 8 5"><path d="M0 4.5L3.6 0L7.2 4.5Z" fill="#4a4a4a"/></svg>
<svg style="left:1008.6px;top:243px;" width="13" height="9" viewBox="0 0 13 9"><path d="M0.3 4.5C2.5 1.2 4.5 0.5 6.5 0.5S10.5 1.2 12.7 4.5C10.5 7.8 8.5 8.5 6.5 8.5S2.5 7.8 0.3 4.5Z" fill="none" stroke="#d6d6d6" stroke-width="1.2"/><circle cx="6.5" cy="4.3" r="2.6" fill="#d6d6d6"/><circle cx="5.6" cy="3.5" r="0.9" fill="#555"/></svg>
<svg style="left:1032px;top:235px;" width="37" height="26" viewBox="0 0 37 26"><path d="M0.5 4V0.5H12 M25 0.5H36.5V4 M36.5 21V24.5H25 M12 24.5H0.5V21" fill="none" stroke="#fff" stroke-width="1"/><rect x="3.5" y="3.5" width="29" height="19" fill="#0e7ca8" stroke="#0c0c0c" stroke-width="1.6"/><rect x="20" y="9.5" width="14" height="13.5" fill="#5b677a"/><path d="M20 9.5V22.5 M20 9.5H32.5" stroke="#0c0c0c" stroke-width="1.6" fill="none"/><rect x="23" y="12" width="9" height="9" fill="none" stroke="#d8d8d8" stroke-width="1"/><rect x="21.7" y="10.7" width="2.6" height="2.6" fill="#5b677a" stroke="#d8d8d8" stroke-width="0.8"/><rect x="21.7" y="19.7" width="2.6" height="2.6" fill="#5b677a" stroke="#d8d8d8" stroke-width="0.8"/><rect x="30.7" y="10.7" width="2.6" height="2.6" fill="#5b677a" stroke="#d8d8d8" stroke-width="0.8"/><rect x="30.7" y="19.7" width="2.6" height="2.6" fill="#5b677a" stroke="#d8d8d8" stroke-width="0.8"/></svg>
<span class="t" style="left:1076.20px;top:240.59px;font-size:11px;color:#fff;transform:scaleX(0.8704);">Rectangle 2</span>
<span class="t" style="left:1181.00px;top:240.11px;font-size:14.5px;color:#d8d8d8;font-style:italic;font-family:'Liberation Serif',serif;transform:scaleX(1.1171);">f</span>
<span class="t" style="left:1185.20px;top:240.67px;font-size:12.5px;color:#d8d8d8;font-style:italic;transform:scaleX(1.0400);">x</span>
<svg style="left:1049.8px;top:271.5px;" width="13" height="9" viewBox="0 0 13 9"><path d="M0.3 4.5C2.5 1.2 4.5 0.5 6.5 0.5S10.5 1.2 12.7 4.5C10.5 7.8 8.5 8.5 6.5 8.5S2.5 7.8 0.3 4.5Z" fill="none" stroke="#d6d6d6" stroke-width="1.2"/><circle cx="6.5" cy="4.3" r="2.6" fill="#d6d6d6"/><circle cx="5.6" cy="3.5" r="0.9" fill="#555"/></svg>
<span class="t" style="left:1069.00px;top:267.79px;font-size:11px;color:#f0f0f0;transform:scaleX(0.8856);">Effects</span>
<svg style="left:1066.8px;top:290.3px;" width="13" height="9" viewBox="0 0 13 9"><path d="M0.3 4.5C2.5 1.2 4.5 0.5 6.5 0.5S10.5 1.2 12.7 4.5C10.5 7.8 8.5 8.5 6.5 8.5S2.5 7.8 0.3 4.5Z" fill="none" stroke="#d6d6d6" stroke-width="1.2"/><circle cx="6.5" cy="4.3" r="2.6" fill="#d6d6d6"/><circle cx="5.6" cy="3.5" r="0.9" fill="#555"/></svg>
<span class="t" style="left:1086.00px;top:286.59px;font-size:11px;color:#f0f0f0;transform:scaleX(0.8798);">Bevel &amp; Emboss</span>
<div style="left:1207px;top:220px;width:14px;height:85px;background:#3a3a3a"></div>
<svg style="left:1210.5px;top:225.5px;" width="7" height="4" viewBox="0 0 7 4"><path d="M0 4L3.5 0L7 4Z" fill="#f0f0f0"/></svg>
<svg style="left:1210.5px;top:296.5px;" width="7" height="4" viewBox="0 0 7 4"><path d="M0 0L3.5 4L7 0Z" fill="#f0f0f0"/></svg>
<div style="left:1209px;top:271px;width:11px;height:16px;background:linear-gradient(90deg,#8a8a8a,#787878);border-radius:3px;"></div>
<div style="left:1000px;top:305px;width:221px;height:2px;background:#3c3c3c"></div>
<div style="left:1000px;top:307px;width:221px;height:19px;background:#535353"></div>
<svg style="left:1018.5px;top:312px;" width="15" height="8" viewBox="0 0 15 8"><rect x="0.8" y="0.8" width="7.4" height="6.4" rx="3.2" fill="none" stroke="#b9b9b9" stroke-width="1.4"/><rect x="6.8" y="0.8" width="7.4" height="6.4" rx="3.2" fill="none" stroke="#b9b9b9" stroke-width="1.4"/><rect x="4.2" y="3.2" width="6.6" height="1.6" fill="#b9b9b9"/></svg>
<span class="t" style="left:1047.50px;top:308.11px;font-size:14.5px;color:#d0d0d0;font-style:italic;font-family:'Liberation Serif',serif;transform:scaleX(1.1171);">f</span>
<span class="t" style="left:1051.80px;top:308.67px;font-size:12.5px;color:#d0d0d0;font-style:italic;transform:scaleX(1.0720);">x</span>
<svg style="left:1060.5px;top:320px;" width="4" height="3" viewBox="0 0 4 3"><path d="M0 0H4L2 2.6Z" fill="#d0d0d0"/></svg>
<svg style="left:1074px;top:311px;" width="13" height="11" viewBox="0 0 13 11"><rect x="0" y="0" width="13" height="11" fill="#b9b9b9"/><circle cx="6.5" cy="5.5" r="2.6" fill="#555"/></svg>
<svg style="left:1101px;top:311px;" width="12" height="12" viewBox="0 0 12 12"><circle cx="5.7" cy="5.7" r="5" fill="none" stroke="#b9b9b9" stroke-width="1.2"/><path d="M2.2 9.3A5 5 0 0 1 9.3 2.2Z" fill="#b9b9b9"/></svg>
<svg style="left:1114.5px;top:320px;" width="4" height="3" viewBox="0 0 4 3"><path d="M0 0H4L2 2.6Z" fill="#d0d0d0"/></svg>
<svg style="left:1128px;top:310.5px;" width="13" height="11" viewBox="0 0 13 11"><path d="M0 0.5H5L6.5 2.5H12.5V10.5H0Z" fill="#b9b9b9"/></svg>
<svg style="left:1156px;top:311px;" width="10" height="11" viewBox="0 0 10 11"><path d="M0 0H10V10.5H4L0 6.5Z" fill="#b9b9b9"/><path d="M0 6.5H4V10.5Z" fill="#6c6c6c" stroke="#535353" stroke-width="0.8"/></svg>
<svg style="left:1182px;top:310px;" width="11" height="12" viewBox="0 0 11 12"><path d="M0 2.5H11 M3.5 2.2V0.6H7.5V2.2" fill="none" stroke="#b9b9b9" stroke-width="1.2"/><path d="M1.2 4H9.8L9 12H2Z" fill="none" stroke="#b9b9b9" stroke-width="1.2"/><path d="M4 5V11M5.5 5V11M7 5V11" stroke="#b9b9b9" stroke-width="0.9"/></svg>
<svg style="left:1210px;top:313px;" width="10" height="10" viewBox="0 0 10 10"><rect x="8" y="8" width="1" height="1" fill="#777"/><rect x="8" y="6" width="1" height="1" fill="#777"/><rect x="6" y="8" width="1" height="1" fill="#777"/><rect x="8" y="4" width="1" height="1" fill="#777"/><rect x="6" y="6" width="1" height="1" fill="#777"/><rect x="4" y="8" width="1" height="1" fill="#777"/><rect x="8" y="2" width="1" height="1" fill="#777"/><rect x="6" y="4" width="1" height="1" fill="#777"/><rect x="4" y="6" width="1" height="1" fill="#777"/><rect x="2" y="8" width="1" height="1" fill="#777"/><rect x="8" y="0" width="1" height="1" fill="#777"/><rect x="6" y="2" width="1" height="1" fill="#777"/><rect x="4" y="4" width="1" height="1" fill="#777"/><rect x="2" y="6" width="1" height="1" fill="#777"/><rect x="0" y="8" width="1" height="1" fill="#777"/></svg>
<div style="left:1000px;top:326px;width:221px;height:1px;background:#3c3c3c"></div>
<div style="left:1000px;top:327px;width:221px;height:5px;background:#505050"></div>
<svg style="left:1101px;top:328.5px;" width="20" height="3" viewBox="0 0 20 3"><rect x="0" y="0" width="1" height="3" fill="#2c2c2c"/><rect x="2" y="0" width="1" height="3" fill="#2c2c2c"/><rect x="4" y="0" width="1" height="3" fill="#2c2c2c"/><rect x="6" y="0" width="1" height="3" fill="#2c2c2c"/><rect x="8" y="0" width="1" height="3" fill="#2c2c2c"/><rect x="10" y="0" width="1" height="3" fill="#2c2c2c"/><rect x="12" y="0" width="1" height="3" fill="#2c2c2c"/><rect x="14" y="0" width="1" height="3" fill="#2c2c2c"/><rect x="16" y="0" width="1" height="3" fill="#2c2c2c"/><rect x="18" y="0" width="1" height="3" fill="#2c2c2c"/></svg>
<div style="left:1224px;top:74px;width:142px;height:1px;background:#626262"></div>
<div style="left:1224px;top:114px;width:142px;height:2px;background:#2e2e2e"></div>
<svg style="left:1285px;top:77.5px;" width="20" height="3" viewBox="0 0 20 3"><rect x="0" y="0" width="1" height="3" fill="#2e2e2e"/><rect x="2" y="0" width="1" height="3" fill="#2e2e2e"/><rect x="4" y="0" width="1" height="3" fill="#2e2e2e"/><rect x="6" y="0" width="1" height="3" fill="#2e2e2e"/><rect x="8" y="0" width="1" height="3" fill="#2e2e2e"/><rect x="10" y="0" width="1" height="3" fill="#2e2e2e"/><rect x="12" y="0" width="1" height="3" fill="#2e2e2e"/><rect x="14" y="0" width="1" height="3" fill="#2e2e2e"/><rect x="16" y="0" width="1" height="3" fill="#2e2e2e"/><rect x="18" y="0" width="1" height="3" fill="#2e2e2e"/></svg>
<div style="left:1224px;top:116px;width:142px;height:1px;background:#626262"></div>
<div style="left:1224px;top:155px;width:142px;height:2px;background:#2e2e2e"></div>
<svg style="left:1285px;top:119.5px;" width="20" height="3" viewBox="0 0 20 3"><rect x="0" y="0" width="1" height="3" fill="#2e2e2e"/><rect x="2" y="0" width="1" height="3" fill="#2e2e2e"/><rect x="4" y="0" width="1" height="3" fill="#2e2e2e"/><rect x="6" y="0" width="1" height="3" fill="#2e2e2e"/><rect x="8" y="0" width="1" height="3" fill="#2e2e2e"/><rect x="10" y="0" width="1" height="3" fill="#2e2e2e"/><rect x="12" y="0" width="1" height="3" fill="#2e2e2e"/><rect x="14" y="0" width="1" height="3" fill="#2e2e2e"/><rect x="16" y="0" width="1" height="3" fill="#2e2e2e"/><rect x="18" y="0" width="1" height="3" fill="#2e2e2e"/></svg>
<div style="left:1224px;top:157px;width:142px;height:1px;background:#626262"></div>
<div style="left:1224px;top:196px;width:142px;height:2px;background:#2e2e2e"></div>
<svg style="left:1285px;top:160.5px;" width="20" height="3" viewBox="0 0 20 3"><rect x="0" y="0" width="1" height="3" fill="#2e2e2e"/><rect x="2" y="0" width="1" height="3" fill="#2e2e2e"/><rect x="4" y="0" width="1" height="3" fill="#2e2e2e"/><rect x="6" y="0" width="1" height="3" fill="#2e2e2e"/><rect x="8" y="0" width="1" height="3" fill="#2e2e2e"/><rect x="10" y="0" width="1" height="3" fill="#2e2e2e"/><rect x="12" y="0" width="1" height="3" fill="#2e2e2e"/><rect x="14" y="0" width="1" height="3" fill="#2e2e2e"/><rect x="16" y="0" width="1" height="3" fill="#2e2e2e"/><rect x="18" y="0" width="1" height="3" fill="#2e2e2e"/></svg>
<div style="left:1224px;top:198px;width:142px;height:1px;background:#626262"></div>
<div style="left:1224px;top:237px;width:142px;height:2px;background:#2e2e2e"></div>
<svg style="left:1285px;top:201.5px;" width="20" height="3" viewBox="0 0 20 3"><rect x="0" y="0" width="1" height="3" fill="#2e2e2e"/><rect x="2" y="0" width="1" height="3" fill="#2e2e2e"/><rect x="4" y="0" width="1" height="3" fill="#2e2e2e"/><rect x="6" y="0" width="1" height="3" fill="#2e2e2e"/><rect x="8" y="0" width="1" height="3" fill="#2e2e2e"/><rect x="10" y="0" width="1" height="3" fill="#2e2e2e"/><rect x="12" y="0" width="1" height="3" fill="#2e2e2e"/><rect x="14" y="0" width="1" height="3" fill="#2e2e2e"/><rect x="16" y="0" width="1" height="3" fill="#2e2e2e"/><rect x="18" y="0" width="1" height="3" fill="#2e2e2e"/></svg>
<div style="left:1224px;top:239px;width:142px;height:1px;background:#626262"></div>
<div style="left:1224px;top:278px;width:142px;height:2px;background:#2e2e2e"></div>
<svg style="left:1285px;top:242.5px;" width="20" height="3" viewBox="0 0 20 3"><rect x="0" y="0" width="1" height="3" fill="#2e2e2e"/><rect x="2" y="0" width="1" height="3" fill="#2e2e2e"/><rect x="4" y="0" width="1" height="3" fill="#2e2e2e"/><rect x="6" y="0" width="1" height="3" fill="#2e2e2e"/><rect x="8" y="0" width="1" height="3" fill="#2e2e2e"/><rect x="10" y="0" width="1" height="3" fill="#2e2e2e"/><rect x="12" y="0" width="1" height="3" fill="#2e2e2e"/><rect x="14" y="0" width="1" height="3" fill="#2e2e2e"/><rect x="16" y="0" width="1" height="3" fill="#2e2e2e"/><rect x="18" y="0" width="1" height="3" fill="#2e2e2e"/></svg>
<div style="left:1224px;top:280px;width:142px;height:1px;background:#626262"></div>
<div style="left:1224px;top:347px;width:142px;height:2px;background:#2e2e2e"></div>
<svg style="left:1285px;top:283.5px;" width="20" height="3" viewBox="0 0 20 3"><rect x="0" y="0" width="1" height="3" fill="#2e2e2e"/><rect x="2" y="0" width="1" height="3" fill="#2e2e2e"/><rect x="4" y="0" width="1" height="3" fill="#2e2e2e"/><rect x="6" y="0" width="1" height="3" fill="#2e2e2e"/><rect x="8" y="0" width="1" height="3" fill="#2e2e2e"/><rect x="10" y="0" width="1" height="3" fill="#2e2e2e"/><rect x="12" y="0" width="1" height="3" fill="#2e2e2e"/><rect x="14" y="0" width="1" height="3" fill="#2e2e2e"/><rect x="16" y="0" width="1" height="3" fill="#2e2e2e"/><rect x="18" y="0" width="1" height="3" fill="#2e2e2e"/></svg>
<div style="left:1224px;top:349px;width:142px;height:1px;background:#626262"></div>
<div style="left:1224px;top:416px;width:142px;height:2px;background:#2e2e2e"></div>
<svg style="left:1285px;top:352.5px;" width="20" height="3" viewBox="0 0 20 3"><rect x="0" y="0" width="1" height="3" fill="#2e2e2e"/><rect x="2" y="0" width="1" height="3" fill="#2e2e2e"/><rect x="4" y="0" width="1" height="3" fill="#2e2e2e"/><rect x="6" y="0" width="1" height="3" fill="#2e2e2e"/><rect x="8" y="0" width="1" height="3" fill="#2e2e2e"/><rect x="10" y="0" width="1" height="3" fill="#2e2e2e"/><rect x="12" y="0" width="1" height="3" fill="#2e2e2e"/><rect x="14" y="0" width="1" height="3" fill="#2e2e2e"/><rect x="16" y="0" width="1" height="3" fill="#2e2e2e"/><rect x="18" y="0" width="1" height="3" fill="#2e2e2e"/></svg>
<div style="left:1224px;top:418px;width:142px;height:1px;background:#626262"></div>
<div style="left:1224px;top:457px;width:142px;height:2px;background:#2e2e2e"></div>
<svg style="left:1285px;top:421.5px;" width="20" height="3" viewBox="0 0 20 3"><rect x="0" y="0" width="1" height="3" fill="#2e2e2e"/><rect x="2" y="0" width="1" height="3" fill="#2e2e2e"/><rect x="4" y="0" width="1" height="3" fill="#2e2e2e"/><rect x="6" y="0" width="1" height="3" fill="#2e2e2e"/><rect x="8" y="0" width="1" height="3" fill="#2e2e2e"/><rect x="10" y="0" width="1" height="3" fill="#2e2e2e"/><rect x="12" y="0" width="1" height="3" fill="#2e2e2e"/><rect x="14" y="0" width="1" height="3" fill="#2e2e2e"/><rect x="16" y="0" width="1" height="3" fill="#2e2e2e"/><rect x="18" y="0" width="1" height="3" fill="#2e2e2e"/></svg>
<div style="left:1224px;top:459px;width:142px;height:1px;background:#626262"></div>
<div style="left:1224px;top:498px;width:142px;height:2px;background:#2e2e2e"></div>
<svg style="left:1285px;top:462.5px;" width="20" height="3" viewBox="0 0 20 3"><rect x="0" y="0" width="1" height="3" fill="#2e2e2e"/><rect x="2" y="0" width="1" height="3" fill="#2e2e2e"/><rect x="4" y="0" width="1" height="3" fill="#2e2e2e"/><rect x="6" y="0" width="1" height="3" fill="#2e2e2e"/><rect x="8" y="0" width="1" height="3" fill="#2e2e2e"/><rect x="10" y="0" width="1" height="3" fill="#2e2e2e"/><rect x="12" y="0" width="1" height="3" fill="#2e2e2e"/><rect x="14" y="0" width="1" height="3" fill="#2e2e2e"/><rect x="16" y="0" width="1" height="3" fill="#2e2e2e"/><rect x="18" y="0" width="1" height="3" fill="#2e2e2e"/></svg>
<div style="left:1184px;top:74px;width:37px;height:1px;background:#626262"></div>
<div style="left:1184px;top:114px;width:37px;height:2px;background:#2e2e2e"></div>
<svg style="left:1193px;top:78.5px;" width="20" height="3" viewBox="0 0 20 3"><rect x="0" y="0" width="1" height="3" fill="#2e2e2e"/><rect x="2" y="0" width="1" height="3" fill="#2e2e2e"/><rect x="4" y="0" width="1" height="3" fill="#2e2e2e"/><rect x="6" y="0" width="1" height="3" fill="#2e2e2e"/><rect x="8" y="0" width="1" height="3" fill="#2e2e2e"/><rect x="10" y="0" width="1" height="3" fill="#2e2e2e"/><rect x="12" y="0" width="1" height="3" fill="#2e2e2e"/><rect x="14" y="0" width="1" height="3" fill="#2e2e2e"/><rect x="16" y="0" width="1" height="3" fill="#2e2e2e"/><rect x="18" y="0" width="1" height="3" fill="#2e2e2e"/></svg>
<svg style="left:1196px;top:89px;" width="14" height="17" viewBox="0 0 14 17"><rect x="0" y="0" width="14" height="17" rx="2" fill="#c4c4c4"/><path d="M2.5 4H7M2.5 6.5H7M2.5 9H7" stroke="#555" stroke-width="1.3"/><rect x="8.2" y="3.2" width="3.6" height="5.6" fill="#555"/><rect x="2.5" y="11.5" width="9.3" height="2.6" fill="#555"/></svg>
<div style="left:1228px;top:126px;width:133px;height:24px;background:#383838;border-radius:3px;box-shadow:0 1px 0 #606060;"></div>
<span class="t" style="left:1261.40px;top:89.39px;font-size:11px;color:#f4f4f4;font-weight:700;transform:scaleX(0.9234);">Mini Bridge</span>
<span class="t" style="left:1261.40px;top:130.39px;font-size:11px;color:#f4f4f4;font-weight:700;transform:scaleX(0.7894);">Layers</span>
<span class="t" style="left:1261.40px;top:171.39px;font-size:11px;color:#f4f4f4;font-weight:700;transform:scaleX(0.8706);">Adjustments</span>
<span class="t" style="left:1261.40px;top:212.39px;font-size:11px;color:#f4f4f4;font-weight:700;transform:scaleX(0.8675);">Properties</span>
<span class="t" style="left:1261.40px;top:253.39px;font-size:11px;color:#f4f4f4;font-weight:700;transform:scaleX(0.8411);">Character</span>
<span class="t" style="left:1261.40px;top:294.39px;font-size:11px;color:#f4f4f4;font-weight:700;transform:scaleX(0.8567);">Paragraph Styles</span>
<span class="t" style="left:1261.40px;top:322.39px;font-size:11px;color:#f4f4f4;font-weight:700;transform:scaleX(0.8500);">Character Styles</span>
<span class="t" style="left:1261.40px;top:363.39px;font-size:11px;color:#f4f4f4;font-weight:700;transform:scaleX(0.8178);">Brush Presets</span>
<span class="t" style="left:1261.40px;top:391.39px;font-size:11px;color:#f4f4f4;font-weight:700;transform:scaleX(0.7929);">Brush</span>
<span class="t" style="left:1261.40px;top:432.39px;font-size:11px;color:#f4f4f4;font-weight:700;transform:scaleX(0.9049);">Timeline</span>
<span class="t" style="left:1261.40px;top:473.39px;font-size:11px;color:#f4f4f4;font-weight:700;transform:scaleX(0.8960);">3D</span>
<svg style="left:1235px;top:88px;" width="17" height="18" viewBox="0 0 17 18"><defs><linearGradient id="gi" x1="0" y1="0" x2="0" y2="1"><stop offset="0" stop-color="#d2d2d2"/><stop offset="1" stop-color="#9c9c9c"/></linearGradient></defs><path d="M0 0H7.5L8.5 2H17V18H0Z" fill="url(#gi)"/></svg>
<span class="t" style="left:1236.60px;top:90.71px;font-size:9.5px;color:#4a4a4a;transform:scaleX(1.0760);">Mb</span>
<svg style="left:1235px;top:129.5px;" width="17" height="17" viewBox="0 0 17 17"><path d="M8.5 6L17 11L8.5 16.5L0 11Z" fill="#a6a6a6"/><path d="M8.5 0L17 5.2L8.5 11L0 5.2Z" fill="#dadada" stroke="#383838" stroke-width="0.8"/></svg>
<svg style="left:1235px;top:170.5px;" width="17" height="17" viewBox="0 0 17 17"><circle cx="8.5" cy="8.5" r="7.6" fill="none" stroke="#c4c4c4" stroke-width="1.5"/><path d="M3.1 13.9A7.6 7.6 0 0 1 13.9 3.1Z" fill="#c4c4c4"/></svg>
<svg style="left:1235px;top:212px;" width="17" height="17" viewBox="0 0 17 17"><path d="M5.5 0.5L10 2.6V7.6L5.5 10L1 7.6V2.6Z" fill="none" stroke="#c4c4c4" stroke-width="1"/><path d="M1 2.6L5.5 4.8L10 2.6M5.5 4.8V10" fill="none" stroke="#c4c4c4" stroke-width="1"/><rect x="12" y="1" width="3.5" height="3.5" fill="#c4c4c4"/><rect x="12" y="6" width="3.5" height="3.5" fill="#c4c4c4"/><rect x="0.5" y="12" width="15" height="4" fill="#c4c4c4"/><path d="M11.5 13.2H14.5L13 15Z" fill="#444"/></svg>
<span class="t" style="left:1235.50px;top:253.51px;font-size:17px;color:#c8c8c8;transform:scaleX(1.0142);">A</span>
<div style="left:1249px;top:252px;width:1px;height:18px;background:#c8c8c8"></div>
<svg style="left:1235px;top:293px;" width="18" height="19" viewBox="0 0 18 19"><rect x="0.6" y="9.6" width="5.8" height="5.8" fill="none" stroke="#c4c4c4" stroke-width="1.2"/><rect x="3.6" y="12.6" width="5.8" height="5.8" fill="#535353" stroke="#c4c4c4" stroke-width="1.2"/><path d="M12.5 13V1.2M15.5 13V1.2M17.5 1H11.5A3.3 3.3 0 0 0 11.5 7.6H12.5" fill="none" stroke="#c4c4c4" stroke-width="1.6"/><path d="M12.5 1.2H11.5A3.2 3.2 0 0 0 11.5 7.4H12.5Z" fill="#c4c4c4"/></svg>
<svg style="left:1235px;top:321px;" width="18" height="19" viewBox="0 0 18 19"><rect x="0.6" y="9.6" width="5.8" height="5.8" fill="none" stroke="#c4c4c4" stroke-width="1.2"/><rect x="3.6" y="12.6" width="5.8" height="5.8" fill="#535353" stroke="#c4c4c4" stroke-width="1.2"/></svg>
<span class="t" style="left:1242.40px;top:318.58px;font-size:14.5px;color:#c8c8c8;font-weight:700;transform:scaleX(1.0695);">A</span>
<svg style="left:1234px;top:364px;" width="19" height="17" viewBox="0 0 19 17"><path d="M0.5 3.5C1.5 1 5.5 1.6 7 3.2L18 3V4.6L7 4.4C5.5 6.6 1.5 6 0.5 3.5Z" fill="#c4c4c4"/><path d="M18.5 12.5C17.5 15.5 13.5 16.8 11.5 15L1 13.2V11.6L11.5 11C13.5 8.8 17.5 9.6 18.5 12.5Z" fill="#c4c4c4"/></svg>
<svg style="left:1235px;top:389.5px;" width="17" height="20" viewBox="0 0 17 20"><path d="M5.5 12H12.5V19.5H5.5Z" fill="#c4c4c4"/><path d="M6.5 12C5 8 2 6 0.5 2C3.5 3 6.5 6 8 12Z" fill="#c4c4c4"/><path d="M8 12C7.5 8 7.5 4 8.5 0.5C10 4 10 8 9.8 12Z" fill="#c4c4c4"/><path d="M10.5 12C11 8.5 13 5.5 16.5 3.5C15.5 7 13.5 9.5 12 12Z" fill="#c4c4c4"/></svg>
<svg style="left:1235px;top:430.5px;" width="18" height="20" viewBox="0 0 18 20"><rect x="0.6" y="6.6" width="16.8" height="9.8" fill="none" stroke="#c4c4c4" stroke-width="1.2"/><path d="M5.5 6.6V16.4M12.5 6.6V16.4" stroke="#c4c4c4" stroke-width="1"/><path d="M1 8.5H17M1 14.5H17" stroke="#c4c4c4" stroke-width="1.4" stroke-dasharray="1.2 1.2"/><path d="M6.5 0.5H11.5L9 4Z" fill="#c4c4c4"/><path d="M9 3V20" stroke="#c4c4c4" stroke-width="1"/></svg>
<svg style="left:1235px;top:472.5px;" width="17" height="18" viewBox="0 0 17 18"><path d="M8.5 0.5L16.5 4V13.5L8.5 17.5L0.5 13.5V4Z" fill="#cfcfcf"/><path d="M0.5 4L8.5 8L16.5 4M8.5 8V17.5" fill="none" stroke="#535353" stroke-width="1.1"/><path d="M0.5 4L8.5 8V17.5L0.5 13.5Z" fill="#b0b0b0" stroke="#535353" stroke-width="0.8"/></svg>
<div style="left:41px;top:751px;width:48px;height:15px;background:#333"></div>
<span class="t" style="left:48.70px;top:749.79px;font-size:11px;color:#f0f0f0;transform:scaleX(0.8658);">33.33%</span>
<div style="left:89px;top:751px;width:207px;height:15px;background:#535353"></div>
<div style="left:112px;top:751px;width:1px;height:15px;background:#3a3a3a"></div>
<svg style="left:95.5px;top:752.5px;" width="12" height="12" viewBox="0 0 12 12"><circle cx="6" cy="6" r="5.6" fill="#c9c9c9"/><path d="M3.2 3.2H6.5L9 5.6V8.8H3.2Z" fill="#5a5a5a"/><path d="M6.3 3.4V5.8H8.8" fill="none" stroke="#c9c9c9" stroke-width="0.9"/></svg>
<span class="t" style="left:158.50px;top:749.79px;font-size:11px;color:#f0f0f0;transform:scaleX(0.8745);">Doc: 5.34M/7.39M</span>
<div style="left:283px;top:751px;width:13px;height:15px;background:#5e5e5e"></div>
<svg style="left:286.5px;top:754px;" width="7" height="9" viewBox="0 0 7 9"><path d="M0 0L6.5 4.5L0 9Z" fill="#f4f4f4"/></svg>
<div style="left:0px;top:766px;width:1366px;height:2px;background:#b7c2d2"></div>
<div style="left:0px;top:767px;width:1366px;height:1px;background:#a9b6c9"></div>
<div style="left:0px;top:766px;width:40px;height:2px;background:#cdd5e0"></div>
<div style="left:42px;top:766px;width:264px;height:2px;background:#cdd5e0"></div>
<div style="left:308px;top:766px;width:70px;height:2px;background:#cdd5e0"></div>
<div style="left:385px;top:766px;width:68px;height:2px;background:#cdd5e0"></div>
</body></html>
